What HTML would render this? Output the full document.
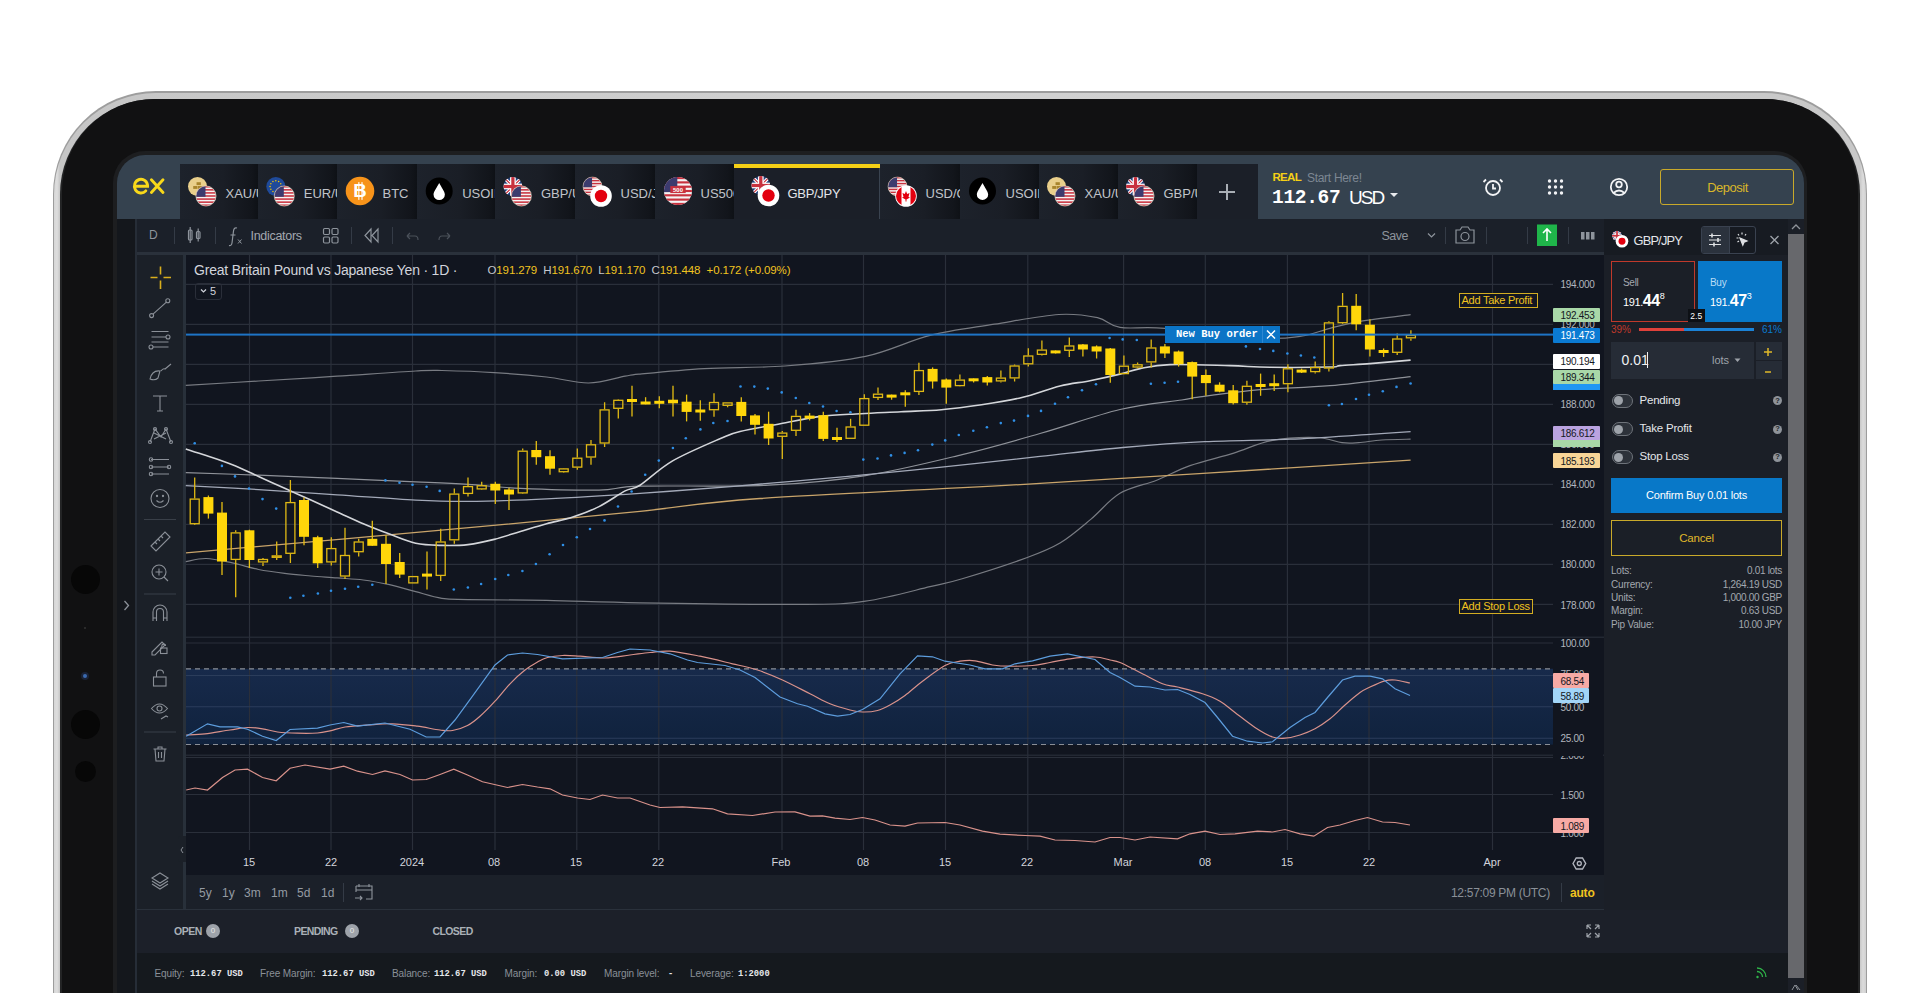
<!DOCTYPE html>
<html><head><meta charset="utf-8"><title>GBP/JPY</title>
<style>
html,body{margin:0;padding:0;width:1920px;height:993px;overflow:hidden;background:#fff;font-family:"Liberation Sans",sans-serif;}
.a{position:absolute;}
.t{position:absolute;white-space:nowrap;line-height:1;}
.mono{font-family:"Liberation Mono",monospace;}
svg{position:absolute;left:0;top:0;overflow:visible;}
</style></head><body>
<div class="a" style="left:52.6px;top:91.2px;width:1814.5px;height:1200px;border-radius:103px;background:#9d9d9d;"></div><div class="a" style="left:53.9px;top:92.5px;width:1811.9px;height:1200px;border-radius:101.7px;background:linear-gradient(90deg,#d6d6d6 0,#dedede 3px,#c6c6c6 6px,#d2d2d2 50%,#c8c8c8 calc(100% - 6px),#dcdcdc calc(100% - 3px),#d0d0d0 100%);"></div><div class="a" style="left:60px;top:98.6px;width:1800px;height:1200px;border-radius:95px;background:#232425;"></div><div class="a" style="left:62.2px;top:99.4px;width:1795.6px;height:1200px;border-radius:93px;background:#111112;"></div><div class="a" style="left:70.5px;top:564.5px;width:29px;height:29px;border-radius:50%;background:#070707;"></div><div class="a" style="left:70.5px;top:710.0px;width:29px;height:29px;border-radius:50%;background:#070707;"></div><div class="a" style="left:74.5px;top:761.0px;width:21px;height:21px;border-radius:50%;background:#070707;"></div><div class="a" style="left:81px;top:672px;width:8px;height:8px;border-radius:50%;background:#1a2235;"></div><div class="a" style="left:83px;top:674px;width:4px;height:4px;border-radius:50%;background:#3a6ab0;"></div><div class="a" style="left:84px;top:627px;width:2px;height:2px;border-radius:50%;background:#333;"></div><div class="a" style="left:113px;top:151px;width:1693.5px;height:900px;border-radius:32px 32px 0 0;background:#1d1e20;"></div><div class="a" id="screen" style="left:117px;top:155px;width:1686.7px;height:900px;border-radius:28px 28px 0 0;overflow:hidden;background:#14171c;"><div class="a" style="left:-117px;top:-155px;width:1920px;height:993px;"><div class="a" style="left:116px;top:154px;width:1690px;height:65px;background:#35424f;"></div><svg width="1920" height="993"><g fill="none" stroke="#f8d81a" stroke-width="2.9" stroke-linecap="round"><path d="M134.6,186.2 H147.6 A6.6,6.9 0 1 0 145.8,190.9"/><path d="M151.4,179.8 L163,192.4 M163,179.8 L151.4,192.4"/></g></svg><div class="a" style="left:180px;top:164px;width:78.3px;height:55px;overflow:hidden;background:linear-gradient(90deg,#1d222b 0%,#1a1e26 55%,#12151b 92%,#0e1116 100%);"><div class="t" style="left:45.5px;top:22.5px;font-size:13px;color:#c0c4ca;">XAU/USD</div></div><div class="a" style="left:258.3px;top:164px;width:78.7px;height:55px;overflow:hidden;background:linear-gradient(90deg,#1d222b 0%,#1a1e26 55%,#12151b 92%,#0e1116 100%);"><div class="t" style="left:45.5px;top:22.5px;font-size:13px;color:#c0c4ca;">EUR/USD</div></div><div class="a" style="left:337px;top:164px;width:79.7px;height:55px;overflow:hidden;background:linear-gradient(90deg,#1d222b 0%,#1a1e26 55%,#12151b 92%,#0e1116 100%);"><div class="t" style="left:45.5px;top:22.5px;font-size:13px;color:#c0c4ca;">BTC</div></div><div class="a" style="left:416.7px;top:164px;width:78.7px;height:55px;overflow:hidden;background:linear-gradient(90deg,#1d222b 0%,#1a1e26 55%,#12151b 92%,#0e1116 100%);"><div class="t" style="left:45.5px;top:22.5px;font-size:13px;color:#c0c4ca;">USOIL</div></div><div class="a" style="left:495.4px;top:164px;width:79.6px;height:55px;overflow:hidden;background:linear-gradient(90deg,#1d222b 0%,#1a1e26 55%,#12151b 92%,#0e1116 100%);"><div class="t" style="left:45.5px;top:22.5px;font-size:13px;color:#c0c4ca;">GBP/USD</div></div><div class="a" style="left:575px;top:164px;width:80.0px;height:55px;overflow:hidden;background:linear-gradient(90deg,#1d222b 0%,#1a1e26 55%,#12151b 92%,#0e1116 100%);"><div class="t" style="left:45.5px;top:22.5px;font-size:13px;color:#c0c4ca;">USD/JPY</div></div><div class="a" style="left:655px;top:164px;width:79.0px;height:55px;overflow:hidden;background:linear-gradient(90deg,#1d222b 0%,#1a1e26 55%,#12151b 92%,#0e1116 100%);"><div class="t" style="left:45.5px;top:22.5px;font-size:13px;color:#c0c4ca;">US500</div></div><div class="a" style="left:880px;top:164px;width:80.0px;height:55px;overflow:hidden;background:linear-gradient(90deg,#1d222b 0%,#1a1e26 55%,#12151b 92%,#0e1116 100%);"><div class="t" style="left:45.5px;top:22.5px;font-size:13px;color:#c0c4ca;">USD/CAD</div></div><div class="a" style="left:960px;top:164px;width:79.0px;height:55px;overflow:hidden;background:linear-gradient(90deg,#1d222b 0%,#1a1e26 55%,#12151b 92%,#0e1116 100%);"><div class="t" style="left:45.5px;top:22.5px;font-size:13px;color:#c0c4ca;">USOIL</div></div><div class="a" style="left:1039px;top:164px;width:79.0px;height:55px;overflow:hidden;background:linear-gradient(90deg,#1d222b 0%,#1a1e26 55%,#12151b 92%,#0e1116 100%);"><div class="t" style="left:45.5px;top:22.5px;font-size:13px;color:#c0c4ca;">XAU/USD</div></div><div class="a" style="left:1118px;top:164px;width:79.0px;height:55px;overflow:hidden;background:linear-gradient(90deg,#1d222b 0%,#1a1e26 55%,#12151b 92%,#0e1116 100%);"><div class="t" style="left:45.5px;top:22.5px;font-size:13px;color:#c0c4ca;">GBP/USD</div></div><div class="a" style="left:734px;top:164px;width:146px;height:55px;background:#1b1f28;"></div><div class="a" style="left:734px;top:164px;width:146px;height:4px;background:#f5d016;"></div><div class="a" style="left:879px;top:168px;width:1px;height:51px;background:#3a4350;"></div><div class="t" style="left:787.5px;top:186.5px;font-size:13px;color:#e4e6ea;letter-spacing:-0.3px;">GBP/JPY</div><div class="a" style="left:1197px;top:164px;width:61px;height:55px;background:#1b1f28;"></div><div class="a" style="left:1219px;top:191px;width:16px;height:1.6px;background:#a9aeb5;"></div><div class="a" style="left:1226.2px;top:183.8px;width:1.6px;height:16px;background:#a9aeb5;"></div><svg width="1920" height="993" style="left:0;top:0"><circle cx="197.5" cy="186.5" r="9.5" fill="#e9cf8b"/><rect x="196.55" y="182.22" width="4.28" height="2.85" fill="#a8842c"/><rect x="193.22" y="186.03" width="4.28" height="2.85" fill="#a8842c"/><rect x="197.97" y="186.03" width="4.28" height="2.85" fill="#a8842c"/><circle cx="206" cy="196" r="10.6" fill="#e6e6e6" opacity="0.25"/><clipPath id="us2060_1960"><circle cx="206" cy="196" r="10"/></clipPath><g clip-path="url(#us2060_1960)"><rect x="196" y="186" width="20" height="20" fill="#f4f4f4"/><rect x="196" y="186.00" width="20" height="1.54" fill="#c8313e"/><rect x="196" y="189.08" width="20" height="1.54" fill="#c8313e"/><rect x="196" y="192.15" width="20" height="1.54" fill="#c8313e"/><rect x="196" y="195.23" width="20" height="1.54" fill="#c8313e"/><rect x="196" y="198.31" width="20" height="1.54" fill="#c8313e"/><rect x="196" y="201.38" width="20" height="1.54" fill="#c8313e"/><rect x="196" y="204.46" width="20" height="1.54" fill="#c8313e"/><rect x="196" y="186" width="9.50" height="10.77" fill="#3c3b6e"/></g><circle cx="206" cy="196" r="10" fill="none" stroke="#e8d9c0" stroke-width="0.8" opacity="0.6"/><circle cx="275.8" cy="186.5" r="9.5" fill="#1f4a9a"/><circle cx="281.50" cy="186.50" r="0.76" fill="#f2c300"/><circle cx="280.74" cy="189.35" r="0.76" fill="#f2c300"/><circle cx="278.65" cy="191.44" r="0.76" fill="#f2c300"/><circle cx="275.80" cy="192.20" r="0.76" fill="#f2c300"/><circle cx="272.95" cy="191.44" r="0.76" fill="#f2c300"/><circle cx="270.86" cy="189.35" r="0.76" fill="#f2c300"/><circle cx="270.10" cy="186.50" r="0.76" fill="#f2c300"/><circle cx="270.86" cy="183.65" r="0.76" fill="#f2c300"/><circle cx="272.95" cy="181.56" r="0.76" fill="#f2c300"/><circle cx="275.80" cy="180.80" r="0.76" fill="#f2c300"/><circle cx="278.65" cy="181.56" r="0.76" fill="#f2c300"/><circle cx="280.74" cy="183.65" r="0.76" fill="#f2c300"/><circle cx="284.3" cy="196" r="10.6" fill="#e6e6e6" opacity="0.25"/><clipPath id="us2843_1960"><circle cx="284.3" cy="196" r="10"/></clipPath><g clip-path="url(#us2843_1960)"><rect x="274.3" y="186" width="20" height="20" fill="#f4f4f4"/><rect x="274.3" y="186.00" width="20" height="1.54" fill="#c8313e"/><rect x="274.3" y="189.08" width="20" height="1.54" fill="#c8313e"/><rect x="274.3" y="192.15" width="20" height="1.54" fill="#c8313e"/><rect x="274.3" y="195.23" width="20" height="1.54" fill="#c8313e"/><rect x="274.3" y="198.31" width="20" height="1.54" fill="#c8313e"/><rect x="274.3" y="201.38" width="20" height="1.54" fill="#c8313e"/><rect x="274.3" y="204.46" width="20" height="1.54" fill="#c8313e"/><rect x="274.3" y="186" width="9.50" height="10.77" fill="#3c3b6e"/></g><circle cx="284.3" cy="196" r="10" fill="none" stroke="#e8d9c0" stroke-width="0.8" opacity="0.6"/><circle cx="360" cy="191" r="14.3" fill="#f7931a"/><text x="360" y="197.44" text-anchor="middle" font-family="Liberation Sans" font-weight="bold" font-size="18.6" fill="#fff">B</text><rect x="358.28" y="182.13" width="1.14" height="17.73" fill="#fff"/><rect x="361.43" y="182.13" width="1.14" height="17.73" fill="#fff"/><circle cx="439.2" cy="191" r="13.5" fill="#000"/><path d="M439.2,182.90 C441.22,186.95 444.87,191.68 444.87,194.38 A5.67,5.67 0 0 1 433.53,194.38 C433.53,191.68 437.18,186.95 439.2,182.90Z" fill="#fff"/><clipPath id="uk5129_1865"><circle cx="512.9" cy="186.5" r="9.5"/></clipPath><g clip-path="url(#uk5129_1865)"><rect x="503.4" y="177.0" width="19.0" height="19.0" fill="#23407a"/><path d="M503.4,177.0L522.4,196.0M522.4,177.0L503.4,196.0" stroke="#fff" stroke-width="3.32"/><path d="M503.4,177.0L522.4,196.0M522.4,177.0L503.4,196.0" stroke="#c8313e" stroke-width="1.14"/><rect x="503.4" y="183.65" width="19.0" height="5.70" fill="#fff"/><rect x="510.05" y="177.0" width="5.70" height="19.0" fill="#fff"/><rect x="503.4" y="184.88" width="19.0" height="3.23" fill="#c8313e"/><rect x="511.28" y="177.0" width="3.23" height="19.0" fill="#c8313e"/></g><circle cx="521.4" cy="196" r="10.6" fill="#e6e6e6" opacity="0.25"/><clipPath id="us5214_1960"><circle cx="521.4" cy="196" r="10"/></clipPath><g clip-path="url(#us5214_1960)"><rect x="511.4" y="186" width="20" height="20" fill="#f4f4f4"/><rect x="511.4" y="186.00" width="20" height="1.54" fill="#c8313e"/><rect x="511.4" y="189.08" width="20" height="1.54" fill="#c8313e"/><rect x="511.4" y="192.15" width="20" height="1.54" fill="#c8313e"/><rect x="511.4" y="195.23" width="20" height="1.54" fill="#c8313e"/><rect x="511.4" y="198.31" width="20" height="1.54" fill="#c8313e"/><rect x="511.4" y="201.38" width="20" height="1.54" fill="#c8313e"/><rect x="511.4" y="204.46" width="20" height="1.54" fill="#c8313e"/><rect x="511.4" y="186" width="9.50" height="10.77" fill="#3c3b6e"/></g><circle cx="521.4" cy="196" r="10" fill="none" stroke="#e8d9c0" stroke-width="0.8" opacity="0.6"/><clipPath id="us5925_1865"><circle cx="592.5" cy="186.5" r="9.5"/></clipPath><g clip-path="url(#us5925_1865)"><rect x="583.0" y="177.0" width="19.0" height="19.0" fill="#f4f4f4"/><rect x="583.0" y="177.00" width="19.0" height="1.46" fill="#c8313e"/><rect x="583.0" y="179.92" width="19.0" height="1.46" fill="#c8313e"/><rect x="583.0" y="182.85" width="19.0" height="1.46" fill="#c8313e"/><rect x="583.0" y="185.77" width="19.0" height="1.46" fill="#c8313e"/><rect x="583.0" y="188.69" width="19.0" height="1.46" fill="#c8313e"/><rect x="583.0" y="191.62" width="19.0" height="1.46" fill="#c8313e"/><rect x="583.0" y="194.54" width="19.0" height="1.46" fill="#c8313e"/><rect x="583.0" y="177.0" width="9.03" height="10.23" fill="#3c3b6e"/></g><circle cx="592.5" cy="186.5" r="9.5" fill="none" stroke="#e8d9c0" stroke-width="0.8" opacity="0.6"/><circle cx="601" cy="196" r="10.8" fill="#fff"/><circle cx="601" cy="196" r="10" fill="#fff"/><circle cx="601" cy="196" r="6.20" fill="#e3000f"/><clipPath id="us6780_1910"><circle cx="678" cy="191" r="14"/></clipPath><g clip-path="url(#us6780_1910)"><rect x="664" y="177" width="28" height="28" fill="#f4f4f4"/><rect x="664" y="177.00" width="28" height="2.15" fill="#c8313e"/><rect x="664" y="181.31" width="28" height="2.15" fill="#c8313e"/><rect x="664" y="185.62" width="28" height="2.15" fill="#c8313e"/><rect x="664" y="189.92" width="28" height="2.15" fill="#c8313e"/><rect x="664" y="194.23" width="28" height="2.15" fill="#c8313e"/><rect x="664" y="198.54" width="28" height="2.15" fill="#c8313e"/><rect x="664" y="202.85" width="28" height="2.15" fill="#c8313e"/><rect x="664" y="177" width="13.30" height="15.08" fill="#3c3b6e"/></g><rect x="670.30" y="186.10" width="15.40" height="7.00" fill="#c8313e"/><text x="678" y="192.12" text-anchor="middle" font-family="Liberation Sans" font-weight="bold" font-size="5.9" fill="#fff">500</text><clipPath id="us8975_1865"><circle cx="897.5" cy="186.5" r="9.5"/></clipPath><g clip-path="url(#us8975_1865)"><rect x="888.0" y="177.0" width="19.0" height="19.0" fill="#f4f4f4"/><rect x="888.0" y="177.00" width="19.0" height="1.46" fill="#c8313e"/><rect x="888.0" y="179.92" width="19.0" height="1.46" fill="#c8313e"/><rect x="888.0" y="182.85" width="19.0" height="1.46" fill="#c8313e"/><rect x="888.0" y="185.77" width="19.0" height="1.46" fill="#c8313e"/><rect x="888.0" y="188.69" width="19.0" height="1.46" fill="#c8313e"/><rect x="888.0" y="191.62" width="19.0" height="1.46" fill="#c8313e"/><rect x="888.0" y="194.54" width="19.0" height="1.46" fill="#c8313e"/><rect x="888.0" y="177.0" width="9.03" height="10.23" fill="#3c3b6e"/></g><circle cx="897.5" cy="186.5" r="9.5" fill="none" stroke="#e8d9c0" stroke-width="0.8" opacity="0.6"/><circle cx="906" cy="196" r="10.8" fill="#fff"/><clipPath id="ca9060_1960"><circle cx="906" cy="196" r="10"/></clipPath><g clip-path="url(#ca9060_1960)"><rect x="896" y="186" width="20" height="20" fill="#fff"/><rect x="896" y="186" width="5.50" height="20" fill="#e3000f"/><rect x="910.50" y="186" width="5.50" height="20" fill="#e3000f"/><path d="M906,191.00 L907.20,194.00 L909.50,193.00 L908.50,197.00 L910.00,197.50 L906.50,199.50 L906.50,201.50 L905.50,201.50 L905.50,199.50 L902.00,197.50 L903.50,197.00 L902.50,193.00 L904.80,194.00Z" fill="#e3000f"/></g><circle cx="982.5" cy="191" r="13.5" fill="#000"/><path d="M982.5,182.90 C984.52,186.95 988.17,191.68 988.17,194.38 A5.67,5.67 0 0 1 976.83,194.38 C976.83,191.68 980.48,186.95 982.5,182.90Z" fill="#fff"/><circle cx="1056.5" cy="186.5" r="9.5" fill="#e9cf8b"/><rect x="1055.55" y="182.22" width="4.28" height="2.85" fill="#a8842c"/><rect x="1052.22" y="186.03" width="4.28" height="2.85" fill="#a8842c"/><rect x="1056.97" y="186.03" width="4.28" height="2.85" fill="#a8842c"/><circle cx="1065" cy="196" r="10.6" fill="#e6e6e6" opacity="0.25"/><clipPath id="us10650_1960"><circle cx="1065" cy="196" r="10"/></clipPath><g clip-path="url(#us10650_1960)"><rect x="1055" y="186" width="20" height="20" fill="#f4f4f4"/><rect x="1055" y="186.00" width="20" height="1.54" fill="#c8313e"/><rect x="1055" y="189.08" width="20" height="1.54" fill="#c8313e"/><rect x="1055" y="192.15" width="20" height="1.54" fill="#c8313e"/><rect x="1055" y="195.23" width="20" height="1.54" fill="#c8313e"/><rect x="1055" y="198.31" width="20" height="1.54" fill="#c8313e"/><rect x="1055" y="201.38" width="20" height="1.54" fill="#c8313e"/><rect x="1055" y="204.46" width="20" height="1.54" fill="#c8313e"/><rect x="1055" y="186" width="9.50" height="10.77" fill="#3c3b6e"/></g><circle cx="1065" cy="196" r="10" fill="none" stroke="#e8d9c0" stroke-width="0.8" opacity="0.6"/><clipPath id="uk11355_1865"><circle cx="1135.5" cy="186.5" r="9.5"/></clipPath><g clip-path="url(#uk11355_1865)"><rect x="1126.0" y="177.0" width="19.0" height="19.0" fill="#23407a"/><path d="M1126.0,177.0L1145.0,196.0M1145.0,177.0L1126.0,196.0" stroke="#fff" stroke-width="3.32"/><path d="M1126.0,177.0L1145.0,196.0M1145.0,177.0L1126.0,196.0" stroke="#c8313e" stroke-width="1.14"/><rect x="1126.0" y="183.65" width="19.0" height="5.70" fill="#fff"/><rect x="1132.65" y="177.0" width="5.70" height="19.0" fill="#fff"/><rect x="1126.0" y="184.88" width="19.0" height="3.23" fill="#c8313e"/><rect x="1133.88" y="177.0" width="3.23" height="19.0" fill="#c8313e"/></g><circle cx="1144" cy="196" r="10.6" fill="#e6e6e6" opacity="0.25"/><clipPath id="us11440_1960"><circle cx="1144" cy="196" r="10"/></clipPath><g clip-path="url(#us11440_1960)"><rect x="1134" y="186" width="20" height="20" fill="#f4f4f4"/><rect x="1134" y="186.00" width="20" height="1.54" fill="#c8313e"/><rect x="1134" y="189.08" width="20" height="1.54" fill="#c8313e"/><rect x="1134" y="192.15" width="20" height="1.54" fill="#c8313e"/><rect x="1134" y="195.23" width="20" height="1.54" fill="#c8313e"/><rect x="1134" y="198.31" width="20" height="1.54" fill="#c8313e"/><rect x="1134" y="201.38" width="20" height="1.54" fill="#c8313e"/><rect x="1134" y="204.46" width="20" height="1.54" fill="#c8313e"/><rect x="1134" y="186" width="9.50" height="10.77" fill="#3c3b6e"/></g><circle cx="1144" cy="196" r="10" fill="none" stroke="#e8d9c0" stroke-width="0.8" opacity="0.6"/><clipPath id="uk7608_1855"><circle cx="760.8" cy="185.5" r="9.5"/></clipPath><g clip-path="url(#uk7608_1855)"><rect x="751.3" y="176.0" width="19.0" height="19.0" fill="#23407a"/><path d="M751.3,176.0L770.3,195.0M770.3,176.0L751.3,195.0" stroke="#fff" stroke-width="3.32"/><path d="M751.3,176.0L770.3,195.0M770.3,176.0L751.3,195.0" stroke="#c8313e" stroke-width="1.14"/><rect x="751.3" y="182.65" width="19.0" height="5.70" fill="#fff"/><rect x="757.95" y="176.0" width="5.70" height="19.0" fill="#fff"/><rect x="751.3" y="183.88" width="19.0" height="3.23" fill="#c8313e"/><rect x="759.18" y="176.0" width="3.23" height="19.0" fill="#c8313e"/></g><circle cx="768.5" cy="195.5" r="10.8" fill="#fff"/><circle cx="768.5" cy="195.5" r="10" fill="#fff"/><circle cx="768.5" cy="195.5" r="6.20" fill="#e3000f"/></svg><div class="t" style="left:1272.5px;top:172px;font-size:11.5px;font-weight:bold;color:#f5d016;letter-spacing:-0.7px;">REAL</div><div class="t" style="left:1307px;top:171.5px;font-size:12px;color:#7d8793;letter-spacing:-0.3px;">Start Here!</div><div class="t mono" style="left:1272px;top:188.5px;font-size:19.5px;font-weight:bold;color:#fff;letter-spacing:-0.3px;">112.67</div><div class="t" style="left:1349px;top:188px;font-size:19px;color:#fff;letter-spacing:-2px;">USD</div><svg width="1920" height="993"><path d="M1390,193 h8 l-4,4z" fill="#e8eaed"/></svg><svg width="1920" height="993">
<g fill="none" stroke="#f2f3f5" stroke-width="1.8">
<circle cx="1493" cy="188" r="7"/><path d="M1493,184 v4.5 h3"/>
<path d="M1486,179.5 l-2.5,2.5 M1500,179.5 l2.5,2.5"/>
<circle cx="1619" cy="187" r="8.2"/><circle cx="1619" cy="184.5" r="2.8"/><path d="M1613.5,193 q5.5,-5 11,0"/>
</g>
<g fill="#f2f3f5"><circle cx="1549.5" cy="181" r="1.7"/><circle cx="1549.5" cy="187" r="1.7"/><circle cx="1549.5" cy="193" r="1.7"/><circle cx="1555.5" cy="181" r="1.7"/><circle cx="1555.5" cy="187" r="1.7"/><circle cx="1555.5" cy="193" r="1.7"/><circle cx="1561.5" cy="181" r="1.7"/><circle cx="1561.5" cy="187" r="1.7"/><circle cx="1561.5" cy="193" r="1.7"/></g>
</svg><div class="a" style="left:1660px;top:168.5px;width:132px;height:34px;border:1.6px solid #c9a92a;border-radius:3px;"></div><div class="t" style="left:1660px;top:180.5px;width:135px;text-align:center;font-size:13px;color:#d9b72a;letter-spacing:-0.5px;">Deposit</div><div class="a" style="left:116px;top:219px;width:20px;height:800px;background:#14171c;"></div><div class="a" style="left:135.3px;top:219px;width:2px;height:800px;background:#262d37;"></div><div class="a" style="left:137px;top:219px;width:1467px;height:33px;background:#1b2029;"></div><div class="a" style="left:137px;top:252px;width:1467px;height:3px;background:#2a313b;"></div><div class="t" style="left:149px;top:229px;font-size:12px;color:#8e949c;">D</div><div class="a" style="left:173.5px;top:227px;width:1px;height:17px;background:#343b46;"></div><div class="a" style="left:214.8px;top:227px;width:1px;height:17px;background:#343b46;"></div><div class="a" style="left:351px;top:227px;width:1px;height:17px;background:#343b46;"></div><div class="a" style="left:391.7px;top:227px;width:1px;height:17px;background:#343b46;"></div><div class="a" style="left:1444.8px;top:227px;width:1px;height:17px;background:#343b46;"></div><div class="a" style="left:1485.8px;top:227px;width:1px;height:17px;background:#343b46;"></div><div class="a" style="left:1526.7px;top:227px;width:1px;height:17px;background:#343b46;"></div><div class="a" style="left:1567.7px;top:227px;width:1px;height:17px;background:#343b46;"></div><div class="t" style="left:250.5px;top:229.5px;font-size:12.5px;color:#a3a8b0;letter-spacing:-0.3px;">Indicators</div><div class="t" style="left:1381.5px;top:229.5px;font-size:12.5px;color:#8e949c;letter-spacing:-0.5px;">Save</div><svg width="1920" height="993"><g fill="none" stroke="#8e949c" stroke-width="1.2">
<rect x="188.5" y="230" width="3.5" height="10" rx="1"/><path d="M190.2,227 v16"/>
<rect x="196.5" y="231.5" width="3.5" height="7" rx="1"/><path d="M198.2,228.5 v13"/>
<path d="M237,228 q-3,-1 -3.5,3 l-1.5,12 q-0.5,3 -3,2.5 M230.5,235 h5"/><path d="M238,239.5 l3.5,4 M241.5,239.5 l-3.5,4" stroke-width="1"/>
<rect x="323.5" y="228.5" width="6" height="6" rx="1.2"/><rect x="332" y="228.5" width="6" height="6" rx="1.2"/>
<rect x="323.5" y="237" width="6" height="6" rx="1.2"/><rect x="332" y="237" width="6" height="6" rx="1.2"/>
<path d="M371,229 l-6,6.5 l6,6.5 z M378,229 l-6,6.5 l6,6.5 z"/>
<path d="M1428,233.5 l3.5,3.5 l3.5,-3.5"/>
<path d="M1456,230 h4 l2,-3 h6 l2,3 h4 v13 h-18 z"/><circle cx="1465" cy="236.5" r="4"/>
</g>
<g fill="none" stroke="#4a5059" stroke-width="1.2"><path d="M407,236 h8 q3,0 3,4 M407,236 l3,-3 M407,236 l3,3"/><path d="M450,236 h-8 q-3,0 -3,4 M450,236 l-3,-3 M450,236 l-3,3"/></g>
<rect x="1537" y="224.5" width="20" height="21.5" fill="#1fb54a"/>
<path d="M1547,229 v12 M1543,233 l4,-4 l4,4" stroke="#fff" stroke-width="1.6" fill="none"/>
<g fill="#8e949c"><rect x="1581" y="232" width="3.5" height="7.5"/><rect x="1586" y="232" width="3.5" height="7.5"/><rect x="1591" y="232" width="3.5" height="7.5"/></g>
</svg><div class="a" style="left:137px;top:255px;width:46px;height:654px;background:#1b2028;"></div><div class="a" style="left:183px;top:255px;width:3px;height:654px;background:#28303a;"></div><svg width="1920" height="993"><g fill="none" stroke="#8b9098" stroke-width="1.1">
<path d="M153,314.2 L166.4,302.2"/><circle cx="151.6" cy="315.6" r="2"/><circle cx="167.8" cy="300.8" r="2"/>
<path d="M151.5,331.5 h17 M151.5,337 h14.5 M151.5,342 h17 M153,347 h15.5"/><circle cx="168" cy="337" r="2"/><circle cx="151" cy="347" r="2"/>
<path d="M150,379 q2,-9 10,-8 l-2,7 q-3,3 -8,1z M161,371 q2,-3 4,-2 l6,-5"/>
<path d="M153,396 h14 M160,396 v15 M157,411 h6"/>
<path d="M150,442 l5,-13 l6,8 l5,-8 l5,13 M154,433 l12,6 M166,433 l-12,6"/><circle cx="155" cy="429" r="1.5"/><circle cx="166" cy="429" r="1.5"/><circle cx="150" cy="442" r="1.5"/><circle cx="171" cy="442" r="1.5"/>
<path d="M151,459.5 h18 M151,467 h18 M151,474 h18"/><circle cx="151" cy="459.5" r="1.7"/><circle cx="151" cy="467" r="1.7"/><circle cx="151" cy="474" r="1.7"/><circle cx="169" cy="467" r="1.7"/>
<circle cx="160" cy="498.5" r="9"/><path d="M156.5,500.5 q3.5,3.5 7,0"/><circle cx="157" cy="496" r="0.6"/><circle cx="163" cy="496" r="0.6"/>
<path d="M151,546 l14,-14 l5,5 l-14,14z M155,542 l2,2 M158,539 l2,2 M161,536 l2,2"/>
<circle cx="159" cy="572" r="7"/><path d="M159,568.5 v7 M155.5,572 h7 M164,577 l4,4"/>
<path d="M153,621 v-9 a7,7 0 0 1 14,0 v9 M153,618 h3.5 M163.5,618 h3.5 M156.5,621 v-9 a3.5,3.5 0 0 1 7,0 v9"/>
<path d="M152,652 l10,-10 l3,3 l-10,10 h-3z"/><rect x="160.5" y="648" width="6.5" height="5.5"/><path d="M161.8,648 v-2 a1.9,1.9 0 0 1 3.8,0"/>
<rect x="153.5" y="677" width="12.5" height="9"/><path d="M156.5,677 v-3.5 a3.5,3.5 0 0 1 7,0"/>
<path d="M151.5,708.5 q8,-9 16,0 q-8,9 -16,0z"/><circle cx="159.5" cy="708.5" r="2.5"/><path d="M161,719 l5,-3 l2,1"/>
<path d="M153.5,749 h13 M158,749 v-2 h4 v2 M155,749 l1,12 h8 l1,-12 M158.5,752 v6 M161.5,752 v6"/>
<path d="M160,873 l8,5 l-8,5 l-8,-5z M152,881 l8,5 l8,-5 M152,884 l8,5 l8,-5"/>
</g>
<g stroke="#d9ae1c" stroke-width="1.6"><path d="M160.5,266.5 v8 M160.5,280.5 v8.5 M150.5,277.5 h7 M163.5,277.5 h7.5"/></g>
<g fill="none" stroke="#393f48" stroke-width="1"><path d="M144,519.5 h32 M144,594 h32 M144,732 h32"/></g>
<path d="M124.5,601 l4,4.5 l-4,4.5" fill="none" stroke="#8b9098" stroke-width="1.3"/>
</svg><div class="a" style="left:186px;top:255px;width:1418px;height:620px;background:#11151f;"></div><svg width="1920" height="993"><defs><linearGradient id="bandg" x1="0" y1="0" x2="0" y2="1"><stop offset="0" stop-color="#172a4b"/><stop offset="1" stop-color="#10223d"/></linearGradient></defs><rect x="186" y="668.8" width="1367" height="75.8" fill="url(#bandg)"/><rect x="186" y="636.5" width="1418" height="1.5" fill="#232833"/><rect x="186" y="754.5" width="1418" height="1.5" fill="#232833"/><path d="M186,284.4H1553M186,324.4H1553M186,364.4H1553M186,404.4H1553M186,444.4H1553M186,484.4H1553M186,524.4H1553M186,564.4H1553M186,604.4H1553M186,643H1553M186,757.5H1553M186,794.5H1553M186,832.5H1553M249.5,255V850M331,255V850M412.5,255V850M495,255V850M576.8,255V850M658.8,255V850M782,255V850M863.5,255V850M945.5,255V850M1027.8,255V850M1123.6,255V850M1205.3,255V850M1287.4,255V850M1369,255V850M1492.5,255V850" stroke="#2a2f3a" stroke-width="1.2" fill="none"/><path d="M186,675.5H1553M186,706.8H1553M186,738.3H1553" stroke="#2b3d5b" stroke-width="1.1" fill="none"/><path d="M186,668.8H1553M186,744.5H1553" stroke="#8a8e96" stroke-width="1.2" stroke-dasharray="5,4" fill="none"/><path d="M185.8,385.4C197.9,384.7 233.4,382.5 258.6,381.0C283.8,379.5 310.9,377.9 337.1,376.2C363.3,374.5 398.2,371.9 415.7,371.0C433.2,370.1 428.8,370.2 441.9,370.5C455.0,370.8 476.8,371.5 494.2,372.6C511.6,373.7 530.9,375.3 546.6,377.0C562.3,378.7 575.4,383.1 588.5,383.0C601.6,382.9 616.5,377.7 625.1,376.2C633.7,374.7 626.8,375.4 640.0,374.1C653.2,372.8 680.2,370.0 704.4,368.6C728.6,367.2 758.1,368.0 785.0,366.0C811.9,364.0 841.3,361.5 865.5,356.4C889.7,351.3 908.5,340.8 930.0,335.4C951.5,330.0 972.9,327.7 994.4,324.2C1015.9,320.7 1041.6,315.6 1058.8,314.5C1076.0,313.4 1087.3,315.6 1097.5,317.7C1107.7,319.8 1108.8,325.6 1120.0,327.4C1131.2,329.2 1141.7,326.5 1165.0,328.3C1188.3,330.1 1237.5,336.6 1260.0,338.0C1282.5,339.4 1288.3,338.0 1300.0,336.4C1311.7,334.8 1320.0,330.8 1330.0,328.3C1340.0,325.8 1346.6,323.6 1360.0,321.3C1373.4,319.0 1402.2,315.7 1410.6,314.6" fill="none" stroke="#787b82" stroke-width="1.2"/><path d="M185.8,561.6C189.2,561.1 198.4,558.3 206.2,558.5C214.0,558.7 223.7,561.1 232.4,562.9C241.1,564.7 249.9,567.8 258.6,569.5C267.3,571.2 276.0,572.3 284.7,573.4C293.4,574.5 302.2,575.2 310.9,576.0C319.6,576.8 328.4,577.2 337.1,577.9C345.8,578.6 354.6,578.9 363.3,580.0C372.0,581.1 380.8,582.8 389.5,584.7C398.2,586.7 407.0,589.4 415.7,591.7C424.4,594.0 433.2,597.0 441.9,598.3C450.6,599.6 450.6,599.2 468.0,599.6C485.4,600.0 517.9,599.9 546.6,600.4C575.3,600.9 597.6,602.1 640.0,602.8C682.4,603.5 763.5,604.7 801.1,604.4C838.7,604.1 844.0,604.2 865.5,601.2C887.0,598.2 913.9,590.5 930.0,586.7C946.1,583.0 946.1,583.5 962.2,578.7C978.3,573.9 1010.3,563.7 1026.6,557.7C1042.9,551.8 1049.3,549.4 1060.0,543.0C1070.7,536.6 1081.0,527.4 1091.0,519.1C1101.0,510.8 1109.0,499.8 1120.0,493.3C1131.0,486.8 1145.0,484.8 1156.7,480.2C1168.4,475.6 1177.2,470.1 1190.0,465.6C1202.8,461.1 1220.2,457.3 1233.8,453.1C1247.3,448.9 1257.4,443.2 1271.3,440.6C1285.2,438.0 1305.2,437.1 1317.0,437.5C1328.8,437.9 1335.0,441.8 1342.0,442.7C1349.0,443.6 1352.2,443.1 1358.8,442.7C1365.4,442.2 1373.1,440.6 1381.7,440.0C1390.3,439.4 1405.8,439.3 1410.6,439.2" fill="none" stroke="#787b82" stroke-width="1.2"/><path d="M185.8,472.6C197.9,473.0 233.4,474.2 258.6,475.2C283.8,476.2 310.9,477.3 337.1,478.4C363.3,479.5 393.9,480.8 415.7,481.8C437.5,482.8 450.6,483.3 468.0,484.4C485.4,485.5 498.6,487.4 520.4,488.3C542.2,489.2 579.1,490.5 599.0,490.1C618.9,489.8 611.7,487.0 640.0,486.2C668.3,485.4 731.3,487.0 768.9,485.2C806.5,483.4 833.3,480.7 865.5,475.6C897.7,470.5 933.1,461.6 962.2,454.6C991.3,447.6 1013.7,441.0 1040.0,433.5C1066.3,426.0 1096.4,415.1 1120.0,409.5C1143.6,403.9 1168.4,402.1 1181.7,400.0C1195.0,397.9 1187.0,398.5 1200.0,396.8C1213.0,395.1 1238.3,391.6 1260.0,389.7C1281.7,387.8 1304.9,387.9 1330.0,385.7C1355.1,383.5 1397.2,378.1 1410.6,376.6" fill="none" stroke="#8f9299" stroke-width="1.2"/><path d="M185.8,485.7C197.9,486.4 233.4,488.1 258.6,489.6C283.8,491.1 310.9,493.1 337.1,494.9C363.3,496.6 393.9,499.0 415.7,500.1C437.5,501.2 446.2,501.6 468.0,501.4C489.8,501.2 517.9,500.1 546.6,498.8C575.3,497.5 608.8,495.4 640.0,493.3C671.2,491.2 699.1,489.1 733.8,486.3C768.5,483.5 813.0,479.5 848.0,476.3C883.0,473.1 912.0,470.2 944.0,466.9C976.0,463.6 1010.2,459.6 1040.0,456.4C1069.8,453.2 1095.5,449.9 1123.0,447.5C1150.5,445.1 1177.2,443.1 1205.0,441.7C1232.8,440.3 1262.5,440.4 1290.0,439.2C1317.5,438.0 1349.9,435.6 1370.0,434.4C1390.1,433.1 1403.8,432.1 1410.6,431.7" fill="none" stroke="#a3a9b8" stroke-width="1.3"/><path d="M186.0,552.9C235.0,548.5 404.3,533.6 480.0,526.7C555.7,519.8 593.3,516.0 640.0,511.3C686.7,506.6 693.3,503.1 760.0,498.5C826.7,493.9 931.6,489.8 1040.0,483.4C1148.4,477.0 1348.8,464.1 1410.6,460.2" fill="none" stroke="#c9a46a" stroke-width="1.3"/><path d="M185.8,449.0C189.2,450.1 198.4,453.0 206.2,455.6C214.0,458.2 223.7,461.2 232.4,464.7C241.1,468.2 249.9,472.6 258.6,476.5C267.3,480.4 276.0,484.4 284.7,488.3C293.4,492.2 302.2,496.2 310.9,500.1C319.6,504.0 328.4,508.0 337.1,511.9C345.8,515.8 354.6,520.0 363.3,523.7C372.0,527.4 380.8,530.8 389.5,534.1C398.2,537.4 407.0,541.4 415.7,543.3C424.4,545.2 433.2,545.2 441.9,545.4C450.6,545.6 459.3,545.6 468.0,544.6C476.7,543.6 485.5,541.6 494.2,539.4C502.9,537.2 511.7,534.1 520.4,531.5C529.1,528.9 537.9,526.1 546.6,523.7C555.3,521.3 564.1,520.0 572.8,517.1C581.5,514.2 590.3,511.0 599.0,506.6C607.7,502.2 618.3,494.5 625.1,490.9C631.9,487.3 632.1,490.2 640.0,485.2C647.9,480.2 658.8,468.9 672.2,461.1C685.6,453.3 709.2,443.4 720.5,438.5C731.8,433.6 730.0,433.9 740.0,431.5C750.0,429.1 766.9,426.3 780.3,423.8C793.7,421.3 807.1,418.1 820.5,416.4C833.9,414.7 847.4,414.5 860.8,413.7C874.2,412.9 887.6,412.4 901.0,411.7C914.4,411.0 927.9,410.9 941.3,409.7C954.7,408.5 968.2,406.7 981.6,404.7C995.0,402.7 1008.8,400.6 1021.9,397.5C1035.0,394.4 1048.7,388.8 1060.0,386.0C1071.3,383.2 1080.0,382.7 1090.0,380.7C1100.0,378.7 1111.7,376.1 1120.0,374.1C1128.3,372.1 1131.7,370.2 1140.0,368.6C1148.3,367.0 1155.0,365.1 1170.0,364.6C1185.0,364.1 1213.3,365.2 1230.0,365.6C1246.7,366.1 1253.3,367.1 1270.0,367.3C1286.7,367.5 1318.3,367.3 1330.0,367.0C1341.7,366.7 1333.3,366.2 1340.0,365.6C1346.7,365.0 1358.2,364.5 1370.0,363.6C1381.8,362.7 1403.8,360.7 1410.6,360.1" fill="none" stroke="#d4d6da" stroke-width="1.6"/><g fill="#2f8fe6"><circle cx="194.7" cy="443.2" r="1.3"/><circle cx="221.9" cy="465.9" r="1.3"/><circle cx="235" cy="476.4" r="1.3"/><circle cx="249" cy="488.5" r="1.3"/><circle cx="262.5" cy="499.1" r="1.3"/><circle cx="276.2" cy="508.6" r="1.3"/><circle cx="290.3" cy="597.8" r="1.3"/><circle cx="303.4" cy="595.8" r="1.3"/><circle cx="317.9" cy="593.5" r="1.3"/><circle cx="331" cy="590.7" r="1.3"/><circle cx="345" cy="588.7" r="1.3"/><circle cx="358.2" cy="586.7" r="1.3"/><circle cx="372.3" cy="584.7" r="1.3"/><circle cx="385.4" cy="480.4" r="1.3"/><circle cx="399.5" cy="482.8" r="1.3"/><circle cx="412.5" cy="484.8" r="1.3"/><circle cx="426.6" cy="486.8" r="1.3"/><circle cx="439.7" cy="490.9" r="1.3"/><circle cx="453.8" cy="589.5" r="1.3"/><circle cx="467.9" cy="587.5" r="1.3"/><circle cx="481.1" cy="584" r="1.3"/><circle cx="495.2" cy="579" r="1.3"/><circle cx="508.3" cy="575" r="1.3"/><circle cx="522.4" cy="571" r="1.3"/><circle cx="535.9" cy="564" r="1.3"/><circle cx="549.6" cy="554.3" r="1.3"/><circle cx="563" cy="545" r="1.3"/><circle cx="576.8" cy="537.2" r="1.3"/><circle cx="590" cy="529" r="1.3"/><circle cx="604.5" cy="520.4" r="1.3"/><circle cx="618" cy="506.5" r="1.3"/><circle cx="631.6" cy="491.5" r="1.3"/><circle cx="645.2" cy="474.8" r="1.3"/><circle cx="658.8" cy="460.6" r="1.3"/><circle cx="672.9" cy="448" r="1.3"/><circle cx="685.8" cy="438.3" r="1.3"/><circle cx="700.4" cy="429.4" r="1.3"/><circle cx="713.3" cy="423" r="1.3"/><circle cx="727.5" cy="421" r="1.3"/><circle cx="740.5" cy="386.5" r="1.3"/><circle cx="754.3" cy="386.6" r="1.3"/><circle cx="767.8" cy="388.6" r="1.3"/><circle cx="781.7" cy="392.4" r="1.3"/><circle cx="795.8" cy="398" r="1.3"/><circle cx="809.3" cy="403" r="1.3"/><circle cx="823" cy="406.5" r="1.3"/><circle cx="836.6" cy="411" r="1.3"/><circle cx="850.4" cy="412.3" r="1.3"/><circle cx="863.3" cy="459.6" r="1.3"/><circle cx="877.5" cy="458.5" r="1.3"/><circle cx="891" cy="455.4" r="1.3"/><circle cx="904.6" cy="452.9" r="1.3"/><circle cx="918" cy="450.2" r="1.3"/><circle cx="932.3" cy="444.6" r="1.3"/><circle cx="945.2" cy="440.4" r="1.3"/><circle cx="958.8" cy="435" r="1.3"/><circle cx="973.3" cy="430.8" r="1.3"/><circle cx="986.9" cy="427.3" r="1.3"/><circle cx="1000.8" cy="423.1" r="1.3"/><circle cx="1014" cy="420.6" r="1.3"/><circle cx="1028" cy="415.9" r="1.3"/><circle cx="1041" cy="410.9" r="1.3"/><circle cx="1055" cy="403.8" r="1.3"/><circle cx="1068" cy="397.2" r="1.3"/><circle cx="1082" cy="390.3" r="1.3"/><circle cx="1096" cy="384.3" r="1.3"/><circle cx="1109.6" cy="338" r="1.3"/><circle cx="1122.7" cy="339.4" r="1.3"/><circle cx="1136.8" cy="340" r="1.3"/><circle cx="1150.9" cy="383.7" r="1.3"/><circle cx="1164.6" cy="382.7" r="1.3"/><circle cx="1178" cy="381.7" r="1.3"/><circle cx="1245.9" cy="346.4" r="1.3"/><circle cx="1260" cy="349" r="1.3"/><circle cx="1273.3" cy="350.9" r="1.3"/><circle cx="1287.4" cy="353.5" r="1.3"/><circle cx="1300.9" cy="355.5" r="1.3"/><circle cx="1314.3" cy="357.5" r="1.3"/><circle cx="1328.9" cy="405.2" r="1.3"/><circle cx="1341.9" cy="404" r="1.3"/><circle cx="1356" cy="399" r="1.3"/><circle cx="1369" cy="394.8" r="1.3"/><circle cx="1382.8" cy="391.2" r="1.3"/><circle cx="1396.5" cy="386.9" r="1.3"/><circle cx="1410.6" cy="383.5" r="1.3"/></g><path d="M194.7,477.4V498.5M194.7,524.3V525.0" stroke="#e0b914" stroke-width="1.3"/><rect x="190.2" y="499.1" width="9" height="24.6" fill="none" stroke="#e0b914" stroke-width="1.3"/><path d="M208.4,495.5V518.6" stroke="#e6bf12" stroke-width="1.3"/><rect x="203.4" y="497.1" width="10" height="16.5" fill="#ffd60a"/><path d="M222.0,502.1V575.0" stroke="#e6bf12" stroke-width="1.3"/><rect x="217.0" y="512.6" width="10" height="48.9" fill="#ffd60a"/><path d="M235.7,530.3V532.3M235.7,560.0V597.2" stroke="#e0b914" stroke-width="1.3"/><rect x="231.2" y="532.9" width="9" height="26.5" fill="none" stroke="#e0b914" stroke-width="1.3"/><path d="M249.4,529.7V568.0" stroke="#e6bf12" stroke-width="1.3"/><rect x="244.4" y="530.3" width="10" height="29.7" fill="#ffd60a"/><path d="M263.0,557.9V558.9M263.0,562.5V566.0" stroke="#e0b914" stroke-width="1.3"/><rect x="258.5" y="559.5" width="9" height="2.4" fill="none" stroke="#e0b914" stroke-width="1.3"/><path d="M276.7,541.4V555.3M276.7,557.9V560.0" stroke="#e0b914" stroke-width="1.3"/><rect x="272.2" y="555.9" width="9" height="1.4" fill="none" stroke="#e0b914" stroke-width="1.3"/><path d="M290.4,480.0V502.0M290.4,553.9V563.0" stroke="#e0b914" stroke-width="1.3"/><rect x="285.9" y="502.6" width="9" height="50.7" fill="none" stroke="#e0b914" stroke-width="1.3"/><path d="M304.0,497.5V545.2" stroke="#e6bf12" stroke-width="1.3"/><rect x="299.0" y="500.0" width="10" height="36.8" fill="#ffd60a"/><path d="M317.7,535.8V568.0" stroke="#e6bf12" stroke-width="1.3"/><rect x="312.7" y="537.2" width="10" height="26.1" fill="#ffd60a"/><path d="M331.3,537.2V548.0M331.3,562.5V565.4" stroke="#e0b914" stroke-width="1.3"/><rect x="326.8" y="548.6" width="9" height="13.3" fill="none" stroke="#e0b914" stroke-width="1.3"/><path d="M345.0,527.7V554.9M345.0,576.6V579.0" stroke="#e0b914" stroke-width="1.3"/><rect x="340.5" y="555.5" width="9" height="20.5" fill="none" stroke="#e0b914" stroke-width="1.3"/><path d="M358.7,538.8V541.4M358.7,552.3V556.5" stroke="#e0b914" stroke-width="1.3"/><rect x="354.2" y="542.0" width="9" height="9.7" fill="none" stroke="#e0b914" stroke-width="1.3"/><path d="M372.3,520.7V545.8" stroke="#e6bf12" stroke-width="1.3"/><rect x="367.3" y="538.8" width="10" height="7.0" fill="#ffd60a"/><path d="M386.0,535.2V584.0" stroke="#e6bf12" stroke-width="1.3"/><rect x="381.0" y="543.8" width="10" height="20.2" fill="#ffd60a"/><path d="M399.7,552.9V578.0" stroke="#e6bf12" stroke-width="1.3"/><rect x="394.7" y="562.0" width="10" height="12.6" fill="#ffd60a"/><path d="M413.3,576.0V576.0M413.3,583.5V583.5" stroke="#e0b914" stroke-width="1.3"/><rect x="408.8" y="576.6" width="9" height="6.3" fill="none" stroke="#e0b914" stroke-width="1.3"/><path d="M427.0,551.5V589.5" stroke="#e6bf12" stroke-width="1.3"/><rect x="422.0" y="573.6" width="10" height="3.0" fill="#ffd60a"/><path d="M440.7,528.7V541.4M440.7,576.0V581.0" stroke="#e0b914" stroke-width="1.3"/><rect x="436.2" y="542.0" width="9" height="33.4" fill="none" stroke="#e0b914" stroke-width="1.3"/><path d="M454.3,488.5V493.5M454.3,540.4V543.8" stroke="#e0b914" stroke-width="1.3"/><rect x="449.8" y="494.1" width="9" height="45.7" fill="none" stroke="#e0b914" stroke-width="1.3"/><path d="M468.0,477.4V486.0M468.0,494.0V496.5" stroke="#e0b914" stroke-width="1.3"/><rect x="463.5" y="486.6" width="9" height="6.8" fill="none" stroke="#e0b914" stroke-width="1.3"/><path d="M481.7,481.8V485.2M481.7,489.5V489.9" stroke="#e0b914" stroke-width="1.3"/><rect x="477.2" y="485.8" width="9" height="3.1" fill="none" stroke="#e0b914" stroke-width="1.3"/><path d="M495.3,481.8V504.0" stroke="#e6bf12" stroke-width="1.3"/><rect x="490.3" y="483.8" width="10" height="6.7" fill="#ffd60a"/><path d="M509.0,487.8V510.0" stroke="#e6bf12" stroke-width="1.3"/><rect x="504.0" y="489.5" width="10" height="5.0" fill="#ffd60a"/><path d="M522.7,448.6V450.6M522.7,493.5V493.9" stroke="#e0b914" stroke-width="1.3"/><rect x="518.2" y="451.2" width="9" height="41.7" fill="none" stroke="#e0b914" stroke-width="1.3"/><path d="M536.3,441.0V464.7" stroke="#e6bf12" stroke-width="1.3"/><rect x="531.3" y="450.0" width="10" height="7.2" fill="#ffd60a"/><path d="M550.0,450.2V474.8" stroke="#e6bf12" stroke-width="1.3"/><rect x="545.0" y="456.2" width="10" height="12.5" fill="#ffd60a"/><path d="M563.7,468.1V468.3M563.7,472.3V472.7" stroke="#e0b914" stroke-width="1.3"/><rect x="559.2" y="468.9" width="9" height="2.8" fill="none" stroke="#e0b914" stroke-width="1.3"/><path d="M577.3,448.6V457.6M577.3,467.7V469.7" stroke="#e0b914" stroke-width="1.3"/><rect x="572.8" y="458.2" width="9" height="8.9" fill="none" stroke="#e0b914" stroke-width="1.3"/><path d="M591.0,440.1V444.2M591.0,457.6V464.7" stroke="#e0b914" stroke-width="1.3"/><rect x="586.5" y="444.8" width="9" height="12.2" fill="none" stroke="#e0b914" stroke-width="1.3"/><path d="M604.6,402.3V409.3M604.6,443.6V447.0" stroke="#e0b914" stroke-width="1.3"/><rect x="600.1" y="409.9" width="9" height="33.1" fill="none" stroke="#e0b914" stroke-width="1.3"/><path d="M618.3,399.3V399.7M618.3,408.9V418.4" stroke="#e0b914" stroke-width="1.3"/><rect x="613.8" y="400.3" width="9" height="8.0" fill="none" stroke="#e0b914" stroke-width="1.3"/><path d="M632.0,385.8V416.4" stroke="#e6bf12" stroke-width="1.3"/><rect x="627.0" y="399.0" width="10" height="3.0" fill="#ffd60a"/><path d="M645.6,397.2V404.3" stroke="#e6bf12" stroke-width="1.3"/><rect x="640.6" y="401.5" width="10" height="3.0" fill="#ffd60a"/><path d="M659.3,396.2V408.3" stroke="#e6bf12" stroke-width="1.3"/><rect x="654.3" y="400.8" width="10" height="3.0" fill="#ffd60a"/><path d="M673.0,385.8V416.4" stroke="#e6bf12" stroke-width="1.3"/><rect x="668.0" y="399.7" width="10" height="3.6" fill="#ffd60a"/><path d="M686.6,394.6V421.4" stroke="#e6bf12" stroke-width="1.3"/><rect x="681.6" y="401.7" width="10" height="10.2" fill="#ffd60a"/><path d="M700.3,400.3V420.8" stroke="#e6bf12" stroke-width="1.3"/><rect x="695.3" y="409.5" width="10" height="3.0" fill="#ffd60a"/><path d="M714.0,393.2V401.9M714.0,410.3V416.8" stroke="#e0b914" stroke-width="1.3"/><rect x="709.5" y="402.5" width="9" height="7.2" fill="none" stroke="#e0b914" stroke-width="1.3"/><path d="M727.6,402.3V402.3M727.6,405.9V407.3" stroke="#e0b914" stroke-width="1.3"/><rect x="723.1" y="402.9" width="9" height="2.4" fill="none" stroke="#e0b914" stroke-width="1.3"/><path d="M741.3,397.2V421.4" stroke="#e6bf12" stroke-width="1.3"/><rect x="736.3" y="401.9" width="10" height="14.1" fill="#ffd60a"/><path d="M755.0,414.0V434.5" stroke="#e6bf12" stroke-width="1.3"/><rect x="750.0" y="415.4" width="10" height="9.4" fill="#ffd60a"/><path d="M768.6,411.7V445.0" stroke="#e6bf12" stroke-width="1.3"/><rect x="763.6" y="423.8" width="10" height="14.7" fill="#ffd60a"/><path d="M782.3,430.9V432.5M782.3,436.9V459.0" stroke="#e0b914" stroke-width="1.3"/><rect x="777.8" y="433.1" width="9" height="3.2" fill="none" stroke="#e0b914" stroke-width="1.3"/><path d="M796.0,409.7V415.8M796.0,430.9V435.9" stroke="#e0b914" stroke-width="1.3"/><rect x="791.5" y="416.4" width="9" height="13.9" fill="none" stroke="#e0b914" stroke-width="1.3"/><path d="M809.6,413.1V420.4" stroke="#e6bf12" stroke-width="1.3"/><rect x="804.6" y="415.6" width="10" height="3.0" fill="#ffd60a"/><path d="M823.3,411.7V441.0" stroke="#e6bf12" stroke-width="1.3"/><rect x="818.3" y="415.2" width="10" height="23.7" fill="#ffd60a"/><path d="M837.0,427.8V442.0" stroke="#e6bf12" stroke-width="1.3"/><rect x="832.0" y="437.0" width="10" height="3.0" fill="#ffd60a"/><path d="M850.6,418.8V426.4M850.6,438.9V438.9" stroke="#e0b914" stroke-width="1.3"/><rect x="846.1" y="427.0" width="9" height="11.3" fill="none" stroke="#e0b914" stroke-width="1.3"/><path d="M864.3,394.2V398.0M864.3,425.8V425.8" stroke="#e0b914" stroke-width="1.3"/><rect x="859.8" y="398.6" width="9" height="26.6" fill="none" stroke="#e0b914" stroke-width="1.3"/><path d="M878.0,387.6V393.6M878.0,398.0V400.0" stroke="#e0b914" stroke-width="1.3"/><rect x="873.5" y="394.2" width="9" height="3.2" fill="none" stroke="#e0b914" stroke-width="1.3"/><path d="M891.6,394.6V399.7" stroke="#e6bf12" stroke-width="1.3"/><rect x="886.6" y="394.6" width="10" height="3.0" fill="#ffd60a"/><path d="M905.3,390.2V406.7" stroke="#e6bf12" stroke-width="1.3"/><rect x="900.3" y="392.3" width="10" height="3.0" fill="#ffd60a"/><path d="M918.9,362.8V370.0M918.9,392.0V395.0" stroke="#e0b914" stroke-width="1.3"/><rect x="914.4" y="370.6" width="9" height="20.8" fill="none" stroke="#e0b914" stroke-width="1.3"/><path d="M932.6,367.4V388.6" stroke="#e6bf12" stroke-width="1.3"/><rect x="927.6" y="368.9" width="10" height="12.6" fill="#ffd60a"/><path d="M946.3,378.5V403.7" stroke="#e6bf12" stroke-width="1.3"/><rect x="941.3" y="379.5" width="10" height="8.1" fill="#ffd60a"/><path d="M959.9,374.5V379.5M959.9,386.2V386.6" stroke="#e0b914" stroke-width="1.3"/><rect x="955.4" y="380.1" width="9" height="5.5" fill="none" stroke="#e0b914" stroke-width="1.3"/><path d="M973.6,378.5V382.5" stroke="#e6bf12" stroke-width="1.3"/><rect x="968.6" y="378.3" width="10" height="3.0" fill="#ffd60a"/><path d="M987.3,376.1V385.6" stroke="#e6bf12" stroke-width="1.3"/><rect x="982.3" y="377.1" width="10" height="5.4" fill="#ffd60a"/><path d="M1000.9,370.5V377.5M1000.9,381.5V382.5" stroke="#e0b914" stroke-width="1.3"/><rect x="996.4" y="378.1" width="9" height="2.8" fill="none" stroke="#e0b914" stroke-width="1.3"/><path d="M1014.6,364.4V365.4M1014.6,378.5V381.5" stroke="#e0b914" stroke-width="1.3"/><rect x="1010.1" y="366.0" width="9" height="11.9" fill="none" stroke="#e0b914" stroke-width="1.3"/><path d="M1028.3,348.3V355.4M1028.3,364.4V366.4" stroke="#e0b914" stroke-width="1.3"/><rect x="1023.8" y="356.0" width="9" height="7.8" fill="none" stroke="#e0b914" stroke-width="1.3"/><path d="M1041.9,340.4V349.5M1041.9,354.9V355.5" stroke="#e0b914" stroke-width="1.3"/><rect x="1037.4" y="350.1" width="9" height="4.2" fill="none" stroke="#e0b914" stroke-width="1.3"/><path d="M1055.6,350.5V353.5" stroke="#e6bf12" stroke-width="1.3"/><rect x="1050.6" y="350.4" width="10" height="3.0" fill="#ffd60a"/><path d="M1069.3,337.4V345.4M1069.3,350.9V356.9" stroke="#e0b914" stroke-width="1.3"/><rect x="1064.8" y="346.0" width="9" height="4.3" fill="none" stroke="#e0b914" stroke-width="1.3"/><path d="M1082.9,344.0V356.5" stroke="#e6bf12" stroke-width="1.3"/><rect x="1077.9" y="344.4" width="10" height="5.1" fill="#ffd60a"/><path d="M1096.6,345.4V358.5" stroke="#e6bf12" stroke-width="1.3"/><rect x="1091.6" y="346.4" width="10" height="5.1" fill="#ffd60a"/><path d="M1110.3,348.0V382.7" stroke="#e6bf12" stroke-width="1.3"/><rect x="1105.3" y="348.5" width="10" height="26.5" fill="#ffd60a"/><path d="M1123.9,355.5V365.6M1123.9,374.2V374.6" stroke="#e0b914" stroke-width="1.3"/><rect x="1119.4" y="366.2" width="9" height="7.4" fill="none" stroke="#e0b914" stroke-width="1.3"/><path d="M1137.6,362.5V364.2M1137.6,367.6V368.6" stroke="#e0b914" stroke-width="1.3"/><rect x="1133.1" y="364.8" width="9" height="2.2" fill="none" stroke="#e0b914" stroke-width="1.3"/><path d="M1151.2,339.4V347.4M1151.2,362.5V367.6" stroke="#e0b914" stroke-width="1.3"/><rect x="1146.8" y="348.0" width="9" height="13.9" fill="none" stroke="#e0b914" stroke-width="1.3"/><path d="M1164.9,344.0V358.1" stroke="#e6bf12" stroke-width="1.3"/><rect x="1159.9" y="346.4" width="10" height="7.1" fill="#ffd60a"/><path d="M1178.6,350.5V366.6" stroke="#e6bf12" stroke-width="1.3"/><rect x="1173.6" y="351.5" width="10" height="12.7" fill="#ffd60a"/><path d="M1192.2,361.5V399.2" stroke="#e6bf12" stroke-width="1.3"/><rect x="1187.2" y="362.1" width="10" height="14.5" fill="#ffd60a"/><path d="M1205.9,369.6V395.8" stroke="#e6bf12" stroke-width="1.3"/><rect x="1200.9" y="375.0" width="10" height="8.1" fill="#ffd60a"/><path d="M1219.6,382.3V392.3" stroke="#e6bf12" stroke-width="1.3"/><rect x="1214.6" y="384.7" width="10" height="7.0" fill="#ffd60a"/><path d="M1233.2,385.1V404.4" stroke="#e6bf12" stroke-width="1.3"/><rect x="1228.2" y="390.3" width="10" height="12.9" fill="#ffd60a"/><path d="M1246.9,380.7V385.7M1246.9,402.8V404.8" stroke="#e0b914" stroke-width="1.3"/><rect x="1242.4" y="386.3" width="9" height="15.9" fill="none" stroke="#e0b914" stroke-width="1.3"/><path d="M1260.6,373.6V395.8" stroke="#e6bf12" stroke-width="1.3"/><rect x="1255.6" y="384.0" width="10" height="3.0" fill="#ffd60a"/><path d="M1274.2,374.6V391.1" stroke="#e6bf12" stroke-width="1.3"/><rect x="1269.2" y="383.2" width="10" height="3.0" fill="#ffd60a"/><path d="M1287.9,364.2V368.2M1287.9,384.3V392.3" stroke="#e0b914" stroke-width="1.3"/><rect x="1283.4" y="368.8" width="9" height="14.9" fill="none" stroke="#e0b914" stroke-width="1.3"/><path d="M1301.6,368.6V373.0" stroke="#e6bf12" stroke-width="1.3"/><rect x="1296.6" y="369.6" width="10" height="3.0" fill="#ffd60a"/><path d="M1315.2,361.5V367.0M1315.2,372.2V373.6" stroke="#e0b914" stroke-width="1.3"/><rect x="1310.7" y="367.6" width="9" height="4.0" fill="none" stroke="#e0b914" stroke-width="1.3"/><path d="M1328.9,321.3V322.3M1328.9,368.6V371.6" stroke="#e0b914" stroke-width="1.3"/><rect x="1324.4" y="322.9" width="9" height="45.1" fill="none" stroke="#e0b914" stroke-width="1.3"/><path d="M1342.6,293.1V305.8M1342.6,323.3V323.9" stroke="#e0b914" stroke-width="1.3"/><rect x="1338.1" y="306.4" width="9" height="16.3" fill="none" stroke="#e0b914" stroke-width="1.3"/><path d="M1356.2,294.1V330.3" stroke="#e6bf12" stroke-width="1.3"/><rect x="1351.2" y="305.8" width="10" height="18.5" fill="#ffd60a"/><path d="M1369.9,319.3V356.5" stroke="#e6bf12" stroke-width="1.3"/><rect x="1364.9" y="324.7" width="10" height="24.8" fill="#ffd60a"/><path d="M1383.6,348.5V356.9" stroke="#e6bf12" stroke-width="1.3"/><rect x="1378.6" y="350.0" width="10" height="3.0" fill="#ffd60a"/><path d="M1397.2,333.4V338.4M1397.2,352.9V354.9" stroke="#e0b914" stroke-width="1.3"/><rect x="1392.7" y="339.0" width="9" height="13.3" fill="none" stroke="#e0b914" stroke-width="1.3"/><path d="M1410.9,330.3V334.8M1410.9,338.4V340.8" stroke="#e0b914" stroke-width="1.3"/><rect x="1406.4" y="335.4" width="9" height="2.4" fill="none" stroke="#e0b914" stroke-width="1.3"/><rect x="186" y="333.6" width="1367" height="2" fill="#1e74c6"/><path d="M186.2,735.0C189.4,734.8 197.7,734.6 205.0,733.8C212.3,732.9 222.9,731.0 230.0,730.0C237.1,729.0 242.1,727.7 247.5,727.5C252.9,727.3 257.5,728.0 262.5,728.8C267.5,729.5 271.7,731.2 277.5,732.0C283.3,732.8 290.8,733.1 297.5,733.2C304.2,733.4 312.1,733.4 317.5,733.0C322.9,732.6 325.4,731.8 330.0,730.8C334.6,729.8 338.8,728.0 345.0,727.0C351.2,726.0 359.6,725.5 367.5,725.0C375.4,724.5 384.2,723.5 392.5,723.8C400.8,724.0 409.6,725.2 417.5,726.2C425.4,727.3 434.2,729.3 440.0,730.0C445.8,730.7 447.9,731.2 452.5,730.5C457.1,729.8 462.9,727.9 467.5,725.5C472.1,723.1 475.4,720.3 480.0,716.2C484.6,712.2 490.0,706.7 495.0,701.2C500.0,695.8 505.0,689.0 510.0,683.8C515.0,678.5 520.4,673.6 525.0,670.0C529.6,666.4 533.8,664.1 537.5,662.0C541.2,659.9 543.3,658.6 547.5,657.5C551.7,656.4 557.1,655.7 562.5,655.5C567.9,655.3 572.9,655.8 580.0,656.2C587.1,656.7 596.7,658.2 605.0,658.0C613.3,657.8 622.5,655.9 630.0,655.0C637.5,654.1 643.3,653.1 650.0,652.5C656.7,651.9 661.7,650.6 670.0,651.2C678.3,651.9 689.6,654.2 700.0,656.2C710.4,658.3 722.9,661.5 732.5,663.8C742.1,666.0 749.2,667.3 757.5,670.0C765.8,672.7 773.8,676.0 782.5,680.0C791.2,684.0 802.1,689.8 810.0,693.8C817.9,697.7 823.3,701.0 830.0,703.8C836.7,706.5 844.6,708.6 850.0,710.0C855.4,711.4 857.9,711.9 862.5,712.0C867.1,712.1 872.9,711.7 877.5,710.5C882.1,709.3 885.4,707.5 890.0,705.0C894.6,702.5 899.6,699.5 905.0,695.5C910.4,691.5 915.8,686.2 922.5,681.2C929.2,676.2 938.8,668.8 945.0,665.5C951.2,662.2 955.0,662.0 960.0,661.2C965.0,660.5 969.6,660.1 975.0,660.8C980.4,661.4 986.7,664.1 992.5,665.0C998.3,665.9 1003.3,666.2 1010.0,666.2C1016.7,666.3 1025.8,666.1 1032.5,665.5C1039.2,664.9 1043.8,663.6 1050.0,662.5C1056.2,661.4 1062.5,659.7 1070.0,658.8C1077.5,657.8 1088.3,656.8 1095.0,657.0C1101.7,657.2 1105.8,659.1 1110.0,660.0C1114.2,660.9 1115.0,660.4 1120.0,662.5C1125.0,664.6 1132.9,669.0 1140.0,672.5C1147.1,676.0 1156.2,681.3 1162.5,683.8C1168.8,686.2 1170.8,685.3 1177.5,687.0C1184.2,688.7 1195.4,691.4 1202.5,693.8C1209.6,696.1 1214.6,698.1 1220.0,701.2C1225.4,704.4 1229.2,708.1 1235.0,712.5C1240.8,716.9 1248.8,723.4 1255.0,727.5C1261.2,731.6 1267.5,735.2 1272.5,737.0C1277.5,738.8 1280.4,738.6 1285.0,738.2C1289.6,737.9 1295.0,736.6 1300.0,735.0C1305.0,733.4 1310.0,731.5 1315.0,728.8C1320.0,726.0 1325.0,722.7 1330.0,718.8C1335.0,714.8 1340.0,709.4 1345.0,705.0C1350.0,700.6 1355.8,695.5 1360.0,692.5C1364.2,689.5 1365.8,689.0 1370.0,687.0C1374.2,685.0 1380.8,681.9 1385.0,680.8C1389.2,679.6 1390.8,679.6 1395.0,680.0C1399.2,680.4 1407.5,682.5 1410.0,683.0" fill="none" stroke="#d9928b" stroke-width="1.2"/><polyline points="186.2,736.2 207.5,723.8 220.0,726.8 237.5,726.8 247.5,729.2 262.5,736.2 276.2,740.5 290.0,729.5 317.5,728.2 330.0,725.0 343.8,722.5 357.5,726.2 385.0,723.0 410.0,729.2 426.2,737.0 440.0,737.0 455.0,720.0 472.5,696.2 495.0,665.0 507.5,655.0 522.5,653.0 537.5,654.5 562.5,658.8 602.5,657.5 617.5,652.5 630.0,649.0 650.0,650.0 670.0,653.8 687.5,660.0 697.5,662.5 725.0,665.5 740.0,670.0 755.0,677.5 780.0,697.0 797.5,703.8 807.5,706.2 825.0,713.8 837.5,716.2 850.0,714.5 862.5,709.5 880.0,698.8 900.0,673.8 917.5,655.8 932.5,656.8 945.0,661.2 970.0,665.0 985.0,668.8 1002.5,668.8 1015.0,663.8 1032.5,660.8 1050.0,656.2 1067.5,653.8 1095.0,659.5 1110.0,672.5 1120.0,677.5 1135.0,686.2 1150.0,687.0 1165.0,690.0 1177.5,689.5 1190.0,694.5 1205.0,702.5 1217.5,717.5 1232.5,736.2 1247.5,741.2 1262.5,743.0 1272.5,741.8 1290.0,727.5 1305.0,717.5 1315.0,712.5 1327.5,697.5 1342.5,680.0 1355.0,676.2 1370.0,676.2 1382.5,678.8 1395.0,688.8 1410.0,695.5" fill="none" stroke="#5d9ddd" stroke-width="1.2"/><polyline points="186.2,790.0 195.0,788.0 207.5,790.0 222.5,777.5 235.0,770.0 247.5,769.2 262.5,777.5 276.2,780.8 290.0,768.2 305.0,765.0 330.0,769.2 343.8,766.2 357.5,771.2 372.5,774.5 385.0,770.8 400.0,774.5 412.5,780.0 426.2,779.5 440.0,774.5 453.8,769.2 467.5,775.0 482.5,781.8 507.5,787.5 522.5,784.5 537.5,787.0 550.0,788.8 562.5,795.0 577.5,798.0 590.0,799.5 602.5,795.0 617.5,798.0 630.0,798.0 650.0,805.0 660.0,807.5 682.5,806.8 712.5,808.8 727.5,813.8 752.5,815.5 775.0,812.0 795.0,811.8 810.0,816.2 822.5,815.8 835.0,818.2 850.0,819.5 862.5,817.5 875.0,820.0 890.0,825.0 905.0,826.2 917.5,823.0 945.0,822.5 960.0,825.0 982.5,831.2 1000.0,834.2 1025.0,835.5 1040.0,836.2 1055.0,840.0 1075.0,840.5 1095.0,842.0 1110.0,837.5 1120.0,837.5 1135.0,840.0 1150.0,837.0 1177.5,838.8 1190.0,833.8 1205.0,831.2 1220.0,834.5 1235.0,833.8 1257.5,831.2 1272.5,832.0 1285.0,829.5 1300.0,833.8 1313.8,836.2 1327.5,827.5 1340.0,825.0 1355.0,820.5 1367.5,817.5 1382.5,822.0 1395.0,822.5 1410.0,825.0" fill="none" stroke="#d9928b" stroke-width="1.2"/></svg><div class="t" style="left:1560.5px;top:280.20000000000005px;font-size:10px;color:#b2b5be;letter-spacing:-0.3px;">194.000</div><div class="t" style="left:1560.5px;top:319.6px;font-size:10px;color:#b2b5be;letter-spacing:-0.3px;">192.000</div><div class="t" style="left:1560.5px;top:359.6px;font-size:10px;color:#b2b5be;letter-spacing:-0.3px;">190.000</div><div class="t" style="left:1560.5px;top:399.6px;font-size:10px;color:#b2b5be;letter-spacing:-0.3px;">188.000</div><div class="t" style="left:1560.5px;top:439.6px;font-size:10px;color:#b2b5be;letter-spacing:-0.3px;">186.000</div><div class="t" style="left:1560.5px;top:479.6px;font-size:10px;color:#b2b5be;letter-spacing:-0.3px;">184.000</div><div class="t" style="left:1560.5px;top:519.6px;font-size:10px;color:#b2b5be;letter-spacing:-0.3px;">182.000</div><div class="t" style="left:1560.5px;top:559.6px;font-size:10px;color:#b2b5be;letter-spacing:-0.3px;">180.000</div><div class="t" style="left:1560.5px;top:600.6px;font-size:10px;color:#b2b5be;letter-spacing:-0.3px;">178.000</div><div class="t" style="left:1560.5px;top:639.1px;font-size:10px;color:#b2b5be;letter-spacing:-0.3px;">100.00</div><div class="t" style="left:1560.5px;top:669.6px;font-size:10px;color:#b2b5be;letter-spacing:-0.3px;">75.00</div><div class="t" style="left:1560.5px;top:702.6px;font-size:10px;color:#b2b5be;letter-spacing:-0.3px;">50.00</div><div class="t" style="left:1560.5px;top:734.1px;font-size:10px;color:#b2b5be;letter-spacing:-0.3px;">25.00</div><div class="t" style="left:1560.5px;top:751.4px;font-size:10px;color:#b2b5be;letter-spacing:-0.3px;">2.000</div><div class="t" style="left:1560.5px;top:791.1px;font-size:10px;color:#b2b5be;letter-spacing:-0.3px;">1.500</div><div class="t" style="left:1560.5px;top:828.6px;font-size:10px;color:#b2b5be;letter-spacing:-0.3px;">1.000</div><div class="a" style="left:1553px;top:744.8px;width:50px;height:11.4px;background:#11151f;"></div><div class="t" style="left:1553px;top:308px;width:47px;height:14px;background:#a9d8a8;border-radius:1px;"><div class="t" style="left:7.5px;top:3.2px;font-size:10px;color:#131722;letter-spacing:-0.3px;">192.453</div></div><div class="t" style="left:1553px;top:328px;width:47px;height:14.5px;background:#0b7bd3;border-radius:1px;"><div class="t" style="left:7.5px;top:3.45px;font-size:10px;color:#fff;letter-spacing:-0.3px;">191.473</div></div><div class="t" style="left:1553px;top:354px;width:47px;height:14.5px;background:#ffffff;border-radius:1px;"><div class="t" style="left:7.5px;top:3.45px;font-size:10px;color:#131722;letter-spacing:-0.3px;">190.194</div></div><div class="a" style="left:1553px;top:383px;width:47px;height:7px;background:#2196f3;"></div><div class="t" style="left:1553px;top:370px;width:47px;height:14px;background:#a9d8a8;border-radius:1px;"><div class="t" style="left:7.5px;top:3.2px;font-size:10px;color:#131722;letter-spacing:-0.3px;">189.344</div></div><div class="a" style="left:1553px;top:439px;width:47px;height:8px;background:#a9d8a8;"></div><div class="t" style="left:1553px;top:426px;width:47px;height:14px;background:#baa3e0;border-radius:1px;"><div class="t" style="left:7.5px;top:3.2px;font-size:10px;color:#131722;letter-spacing:-0.3px;">186.612</div></div><div class="t" style="left:1553px;top:453.3px;width:47px;height:14.5px;background:#f8d597;border-radius:1px;"><div class="t" style="left:7.5px;top:3.45px;font-size:10px;color:#131722;letter-spacing:-0.3px;">185.193</div></div><div class="t" style="left:1553px;top:673px;width:36px;height:15px;background:#f7aaa5;border-radius:1px;"><div class="t" style="left:7.5px;top:3.7px;font-size:10px;color:#131722;letter-spacing:-0.3px;">68.54</div></div><div class="t" style="left:1553px;top:688px;width:36px;height:15px;background:#a2d5f8;border-radius:1px;"><div class="t" style="left:7.5px;top:3.7px;font-size:10px;color:#131722;letter-spacing:-0.3px;">58.89</div></div><div class="t" style="left:1553px;top:818px;width:36px;height:15px;background:#f7aaa5;border-radius:1px;"><div class="t" style="left:7.5px;top:3.7px;font-size:10px;color:#131722;letter-spacing:-0.3px;">1.089</div></div><div class="t" style="left:219px;top:857px;width:60px;text-align:center;font-size:11px;color:#d1d4dc;">15</div><div class="t" style="left:301px;top:857px;width:60px;text-align:center;font-size:11px;color:#d1d4dc;">22</div><div class="t" style="left:382px;top:857px;width:60px;text-align:center;font-size:11px;color:#d1d4dc;">2024</div><div class="t" style="left:464px;top:857px;width:60px;text-align:center;font-size:11px;color:#d1d4dc;">08</div><div class="t" style="left:546px;top:857px;width:60px;text-align:center;font-size:11px;color:#d1d4dc;">15</div><div class="t" style="left:628px;top:857px;width:60px;text-align:center;font-size:11px;color:#d1d4dc;">22</div><div class="t" style="left:751px;top:857px;width:60px;text-align:center;font-size:11px;color:#d1d4dc;">Feb</div><div class="t" style="left:833px;top:857px;width:60px;text-align:center;font-size:11px;color:#d1d4dc;">08</div><div class="t" style="left:915px;top:857px;width:60px;text-align:center;font-size:11px;color:#d1d4dc;">15</div><div class="t" style="left:997px;top:857px;width:60px;text-align:center;font-size:11px;color:#d1d4dc;">22</div><div class="t" style="left:1093px;top:857px;width:60px;text-align:center;font-size:11px;color:#d1d4dc;">Mar</div><div class="t" style="left:1175px;top:857px;width:60px;text-align:center;font-size:11px;color:#d1d4dc;">08</div><div class="t" style="left:1257px;top:857px;width:60px;text-align:center;font-size:11px;color:#d1d4dc;">15</div><div class="t" style="left:1339px;top:857px;width:60px;text-align:center;font-size:11px;color:#d1d4dc;">22</div><div class="t" style="left:1462px;top:857px;width:60px;text-align:center;font-size:11px;color:#d1d4dc;">Apr</div><svg width="1920" height="993"><path d="M1573,863.5 l3.2,-5.5 h6.3 l3.2,5.5 l-3.2,5.5 h-6.3z" fill="none" stroke="#b2b5be" stroke-width="1.4"/><circle cx="1579.3" cy="863.5" r="2" fill="none" stroke="#b2b5be" stroke-width="1.3"/></svg><div class="a" style="left:178px;top:836px;width:8px;height:26px;background:#1b2028;border-radius:3px 0 0 3px;"></div><svg width="1920" height="993"><path d="M183,847 l-2,3 l2,3" fill="none" stroke="#8b9098" stroke-width="1"/></svg><div class="t" style="left:194px;top:262.5px;font-size:14px;color:#d1d4dc;letter-spacing:-0.2px;">Great Britain Pound vs Japanese Yen · 1D ·</div><div class="t" style="left:487.5px;top:264.8px;font-size:11.5px;color:#f0c31f;letter-spacing:-0.12px;"><span style="color:#c5c8ce">O</span>191.279&nbsp; <span style="color:#c5c8ce">H</span>191.670&nbsp; <span style="color:#c5c8ce">L</span>191.170&nbsp; <span style="color:#c5c8ce">C</span>191.448&nbsp; +0.172 (+0.09%)</div><div class="a" style="left:194.5px;top:282.5px;width:27px;height:17px;border:1px solid #2a2e39;border-radius:3px;box-sizing:border-box;"></div><svg width="1920" height="993"><path d="M201,289.5 l2.5,2.5 l2.5,-2.5" fill="none" stroke="#d1d4dc" stroke-width="1.2"/></svg><div class="t" style="left:210px;top:286px;font-size:11px;color:#d1d4dc;">5</div><div class="a" style="left:1164.6px;top:326.3px;width:115px;height:16.5px;background:#0b74c6;"></div><div class="a" style="left:1261.5px;top:326.3px;width:1px;height:16.5px;background:#2d88d3;"></div><div class="t mono" style="left:1176px;top:329px;font-size:10.5px;font-weight:bold;color:#fff;">New Buy order</div><svg width="1920" height="993"><path d="M1267,330.5 l8,8 M1275,330.5 l-8,8" stroke="#fff" stroke-width="1.5"/></svg><div class="a" style="left:1459.3px;top:292.7px;width:79px;height:15px;border:1.3px solid #d3ad22;box-sizing:border-box;background:#131722;"></div><div class="t" style="left:1461.5px;top:295px;font-size:11px;color:#f0c31f;letter-spacing:-0.25px;">Add Take Profit</div><div class="a" style="left:1459px;top:598.5px;width:73.5px;height:15.5px;border:1.3px solid #d3ad22;box-sizing:border-box;background:#131722;"></div><div class="t" style="left:1461.5px;top:601px;font-size:11px;color:#f0c31f;letter-spacing:-0.25px;">Add Stop Loss</div><div class="a" style="left:186px;top:874.5px;width:1418px;height:34.5px;background:#1b2029;"></div><div class="a" style="left:137px;top:909px;width:1467px;height:1px;background:#2a313b;"></div><div class="t" style="left:199px;top:886.5px;font-size:12px;color:#959ba3;">5y</div><div class="t" style="left:222px;top:886.5px;font-size:12px;color:#959ba3;">1y</div><div class="t" style="left:244px;top:886.5px;font-size:12px;color:#959ba3;">3m</div><div class="t" style="left:271px;top:886.5px;font-size:12px;color:#959ba3;">1m</div><div class="t" style="left:297px;top:886.5px;font-size:12px;color:#959ba3;">5d</div><div class="t" style="left:321px;top:886.5px;font-size:12px;color:#959ba3;">1d</div><div class="a" style="left:343px;top:883px;width:1px;height:19px;background:#343b46;"></div><svg width="1920" height="993"><g fill="none" stroke="#8e949c" stroke-width="1.1"><path d="M356,886 h16 v13 h-6 M356,886 v6 M356,890 h16 M359,884 v3 M369,884 v3 M355,898 h7 M360,896 l2,2 l-2,2"/></g></svg><div class="t" style="left:1451px;top:886.5px;font-size:12px;color:#8a9098;letter-spacing:-0.3px;">12:57:09 PM (UTC)</div><div class="a" style="left:1560.5px;top:883px;width:1px;height:19px;background:#343b46;"></div><div class="t" style="left:1570px;top:887px;font-size:12px;font-weight:bold;color:#f0c31f;letter-spacing:-0.2px;">auto</div><div class="a" style="left:137px;top:910px;width:1651px;height:42.5px;background:#1c2029;"></div><div class="t" style="left:174px;top:925.5px;font-size:10.5px;font-weight:bold;color:#aab0b7;letter-spacing:-0.5px;">OPEN</div><div class="t" style="left:294px;top:925.5px;font-size:10.5px;font-weight:bold;color:#aab0b7;letter-spacing:-0.6px;">PENDING</div><div class="t" style="left:432.5px;top:925.5px;font-size:10.5px;font-weight:bold;color:#aab0b7;letter-spacing:-0.6px;">CLOSED</div><div class="a" style="left:206px;top:924px;width:14px;height:14px;border-radius:50%;background:#9ea3aa;"></div><div class="t" style="left:206px;top:927px;width:14px;text-align:center;font-size:8px;color:#e8e8e8;">0</div><div class="a" style="left:345px;top:924px;width:14px;height:14px;border-radius:50%;background:#9ea3aa;"></div><div class="t" style="left:345px;top:927px;width:14px;text-align:center;font-size:8px;color:#e8e8e8;">0</div><svg width="1920" height="993"><g fill="none" stroke="#9ea3aa" stroke-width="1.2"><path d="M1587,925 h4 M1587,925 v4 M1587,925 l4,4 M1599,925 h-4 M1599,925 v4 M1599,925 l-4,4 M1587,937 h4 M1587,937 v-4 M1587,937 l4,-4 M1599,937 h-4 M1599,937 v-4 M1599,937 l-4,-4"/></g></svg><div class="a" style="left:137px;top:952.5px;width:1651px;height:45px;background:#15191e;"></div><div class="t" style="left:154.5px;top:969px;font-size:10px;color:#8a9098;letter-spacing:-0.1px;">Equity:</div><div class="t mono" style="left:190px;top:970px;font-size:8.8px;font-weight:bold;color:#e6e8eb;">112.67 USD</div><div class="t" style="left:260px;top:969px;font-size:10px;color:#8a9098;letter-spacing:-0.1px;">Free Margin:</div><div class="t mono" style="left:322px;top:970px;font-size:8.8px;font-weight:bold;color:#e6e8eb;">112.67 USD</div><div class="t" style="left:392px;top:969px;font-size:10px;color:#8a9098;letter-spacing:-0.1px;">Balance:</div><div class="t mono" style="left:434px;top:970px;font-size:8.8px;font-weight:bold;color:#e6e8eb;">112.67 USD</div><div class="t" style="left:504.5px;top:969px;font-size:10px;color:#8a9098;letter-spacing:-0.1px;">Margin:</div><div class="t mono" style="left:544px;top:970px;font-size:8.8px;font-weight:bold;color:#e6e8eb;">0.00 USD</div><div class="t" style="left:604px;top:969px;font-size:10px;color:#8a9098;letter-spacing:-0.1px;">Margin level:</div><div class="t mono" style="left:668px;top:970px;font-size:8.8px;font-weight:bold;color:#e6e8eb;">-</div><div class="t" style="left:690px;top:969px;font-size:10px;color:#8a9098;letter-spacing:-0.1px;">Leverage:</div><div class="t mono" style="left:738px;top:970px;font-size:8.8px;font-weight:bold;color:#e6e8eb;">1:2000</div><svg width="1920" height="993"><g fill="none" stroke="#2fb54a" stroke-width="1.3"><path d="M1757,968 a9,9 0 0 1 9,9 M1757,971.5 a5.5,5.5 0 0 1 5.5,5.5"/></g><circle cx="1757.5" cy="977" r="1.2" fill="#2fb54a"/></svg><div class="a" style="left:1604px;top:219px;width:184px;height:691px;background:#1b1f27;"></div><div class="a" style="left:1604px;top:219px;width:184px;height:36px;background:#171b22;"></div><svg width="1920" height="993"><clipPath id="uk16170_2358"><circle cx="1617" cy="235.8" r="5"/></clipPath><g clip-path="url(#uk16170_2358)"><rect x="1612" y="230.8" width="10" height="10" fill="#23407a"/><path d="M1612,230.8L1622,240.8M1622,230.8L1612,240.8" stroke="#fff" stroke-width="1.75"/><path d="M1612,230.8L1622,240.8M1622,230.8L1612,240.8" stroke="#c8313e" stroke-width="0.60"/><rect x="1612" y="234.30" width="10" height="3.00" fill="#fff"/><rect x="1615.50" y="230.8" width="3.00" height="10" fill="#fff"/><rect x="1612" y="234.95" width="10" height="1.70" fill="#c8313e"/><rect x="1616.15" y="230.8" width="1.70" height="10" fill="#c8313e"/></g><circle cx="1622" cy="241.3" r="6.3" fill="#fff"/><circle cx="1622" cy="241.3" r="5.6" fill="#fff"/><circle cx="1622" cy="241.3" r="3.47" fill="#e3000f"/></svg><div class="t" style="left:1633.5px;top:234.5px;font-size:12.8px;color:#e4e6ea;letter-spacing:-0.8px;">GBP/JPY</div><div class="a" style="left:1701px;top:226px;width:55px;height:28px;border:1px solid #3a4250;border-radius:3px;box-sizing:border-box;background:#161a21;overflow:hidden;"><div class="a" style="left:0;top:0;width:27.5px;height:28px;background:#2b323d;"></div></div><div class="a" style="left:1729px;top:226px;width:1px;height:28px;background:#3a4250;"></div><svg width="1920" height="993"><g stroke="#dfe1e4" stroke-width="1.2" fill="none">
<path d="M1709,235.5 h12 M1709,240 h12 M1709,244.5 h12"/>
<path d="M1712,233.5 v4 M1718,238 v4 M1714,242.5 v4" stroke-width="1.6"/>
<path d="M1740,238 l7,3 l-3,1.2 l-1.2,3z" fill="#dfe1e4"/>
<path d="M1738,234 l1,1.5 M1742,232.5 v2 M1746,234 l-1,1.5 M1736.5,238 h2 M1737.5,242 l1.5,-1"/>
<path d="M1770.5,236 l8,8 M1778.5,236 l-8,8" stroke="#9ea3aa" stroke-width="1.3"/>
</g></svg><div class="a" style="left:1611px;top:261px;width:84px;height:61px;border:1.5px solid #c0392b;box-sizing:border-box;background:#1b1f27;"></div><div class="a" style="left:1698px;top:261px;width:84px;height:61px;background:#0878c8;"></div><div class="t" style="left:1623px;top:278px;font-size:10px;color:#a3a8ae;letter-spacing:-0.3px;">Sell</div><div class="t" style="left:1623px;top:292px;font-size:11px;color:#fff;letter-spacing:-0.4px;">191.<span style="font-size:16px;font-weight:bold;">44</span><sup style="font-size:9px;vertical-align:7px;">8</sup></div><div class="t" style="left:1710px;top:278px;font-size:10px;color:#b9dcf5;letter-spacing:-0.3px;">Buy</div><div class="t" style="left:1710px;top:292px;font-size:11px;color:#fff;letter-spacing:-0.4px;">191.<span style="font-size:16px;font-weight:bold;">47</span><sup style="font-size:9px;vertical-align:7px;">3</sup></div><div class="a" style="left:1687.5px;top:309px;width:17.5px;height:12.5px;background:#0d1015;"></div><div class="t" style="left:1687.5px;top:311.5px;width:17.5px;text-align:center;font-size:8.5px;color:#fff;">2.5</div><div class="t" style="left:1611px;top:325px;font-size:10px;color:#c0392b;">39%</div><div class="t" style="left:1762px;top:325px;font-size:10px;color:#0a7bd0;">61%</div><div class="a" style="left:1639px;top:328px;width:45px;height:3px;background:#e0413a;"></div><div class="a" style="left:1684px;top:328px;width:70px;height:3px;background:#1b82d6;"></div><div class="a" style="left:1611px;top:341.5px;width:143px;height:37.5px;background:#262c36;"></div><div class="a" style="left:1755.5px;top:341.5px;width:26.5px;height:18.5px;background:#262c36;"></div><div class="a" style="left:1755.5px;top:361px;width:26.5px;height:18px;background:#262c36;"></div><div class="t" style="left:1621.5px;top:353px;font-size:14px;color:#f0f1f3;">0.01</div><div class="a" style="left:1647px;top:352px;width:1px;height:16px;background:#f0f1f3;"></div><div class="t" style="left:1712px;top:355px;font-size:11px;color:#9ea3aa;">lots</div><svg width="1920" height="993"><path d="M1734.5,358.5 h6 l-3,3.5z" fill="#9ea3aa"/><path d="M1764,352 h8 M1768,348 v8 M1765,372 h6" stroke="#e0b82a" stroke-width="1.5"/></svg><div class="a" style="left:1611.5px;top:393.7px;width:21px;height:14px;border-radius:7px;border:1.5px solid #6e737a;box-sizing:border-box;background:#2d323a;"></div><div class="a" style="left:1614px;top:396.2px;width:9px;height:9px;border-radius:50%;background:#9ea3aa;"></div><div class="t" style="left:1639.5px;top:394.7px;font-size:11.5px;color:#e4e6ea;letter-spacing:-0.2px;">Pending</div><div class="a" style="left:1773px;top:396.2px;width:9px;height:9px;border-radius:50%;background:#8e939a;"></div><div class="t" style="left:1773px;top:396.7px;width:9px;text-align:center;font-size:7.5px;font-weight:bold;color:#1b1f27;">?</div><div class="a" style="left:1611.5px;top:422px;width:21px;height:14px;border-radius:7px;border:1.5px solid #6e737a;box-sizing:border-box;background:#2d323a;"></div><div class="a" style="left:1614px;top:424.5px;width:9px;height:9px;border-radius:50%;background:#9ea3aa;"></div><div class="t" style="left:1639.5px;top:423px;font-size:11.5px;color:#e4e6ea;letter-spacing:-0.2px;">Take Profit</div><div class="a" style="left:1773px;top:424.5px;width:9px;height:9px;border-radius:50%;background:#8e939a;"></div><div class="t" style="left:1773px;top:425px;width:9px;text-align:center;font-size:7.5px;font-weight:bold;color:#1b1f27;">?</div><div class="a" style="left:1611.5px;top:450.3px;width:21px;height:14px;border-radius:7px;border:1.5px solid #6e737a;box-sizing:border-box;background:#2d323a;"></div><div class="a" style="left:1614px;top:452.8px;width:9px;height:9px;border-radius:50%;background:#9ea3aa;"></div><div class="t" style="left:1639.5px;top:451.3px;font-size:11.5px;color:#e4e6ea;letter-spacing:-0.2px;">Stop Loss</div><div class="a" style="left:1773px;top:452.8px;width:9px;height:9px;border-radius:50%;background:#8e939a;"></div><div class="t" style="left:1773px;top:453.3px;width:9px;text-align:center;font-size:7.5px;font-weight:bold;color:#1b1f27;">?</div><div class="a" style="left:1611px;top:478px;width:171px;height:35px;background:#0878c8;"></div><div class="t" style="left:1611px;top:490px;width:171px;text-align:center;font-size:11px;color:#fff;letter-spacing:-0.2px;">Confirm Buy 0.01 lots</div><div class="a" style="left:1611px;top:520px;width:171px;height:35.5px;border:1.8px solid #c9a92a;box-sizing:border-box;"></div><div class="t" style="left:1611px;top:532.5px;width:171px;text-align:center;font-size:11.5px;color:#e0b82a;letter-spacing:-0.2px;">Cancel</div><div class="t" style="left:1611px;top:566.1px;font-size:10px;color:#a3a8af;letter-spacing:-0.2px;">Lots:</div><div class="t" style="left:1682px;top:566.1px;width:100px;text-align:right;font-size:10px;color:#a3a8af;letter-spacing:-0.3px;">0.01 lots</div><div class="t" style="left:1611px;top:579.5px;font-size:10px;color:#a3a8af;letter-spacing:-0.2px;">Currency:</div><div class="t" style="left:1682px;top:579.5px;width:100px;text-align:right;font-size:10px;color:#a3a8af;letter-spacing:-0.3px;">1,264.19 USD</div><div class="t" style="left:1611px;top:592.9px;font-size:10px;color:#a3a8af;letter-spacing:-0.2px;">Units:</div><div class="t" style="left:1682px;top:592.9px;width:100px;text-align:right;font-size:10px;color:#a3a8af;letter-spacing:-0.3px;">1,000.00 GBP</div><div class="t" style="left:1611px;top:606.3000000000001px;font-size:10px;color:#a3a8af;letter-spacing:-0.2px;">Margin:</div><div class="t" style="left:1682px;top:606.3000000000001px;width:100px;text-align:right;font-size:10px;color:#a3a8af;letter-spacing:-0.3px;">0.63 USD</div><div class="t" style="left:1611px;top:619.7px;font-size:10px;color:#a3a8af;letter-spacing:-0.2px;">Pip Value:</div><div class="t" style="left:1682px;top:619.7px;width:100px;text-align:right;font-size:10px;color:#a3a8af;letter-spacing:-0.3px;">10.00 JPY</div><div class="a" style="left:1788px;top:219px;width:16px;height:800px;background:#1b1f27;"></div><div class="a" style="left:1788.3px;top:234px;width:16px;height:743.5px;background:#67686c;"></div><svg width="1920" height="993"><path d="M1792,229 l4,-4 l4,4" fill="none" stroke="#8e939a" stroke-width="1.3"/><path d="M1792,990 l3,-5 l3,5 M1796,985 l4,5" fill="none" stroke="#8e939a" stroke-width="1"/></svg></div></div></body></html>
